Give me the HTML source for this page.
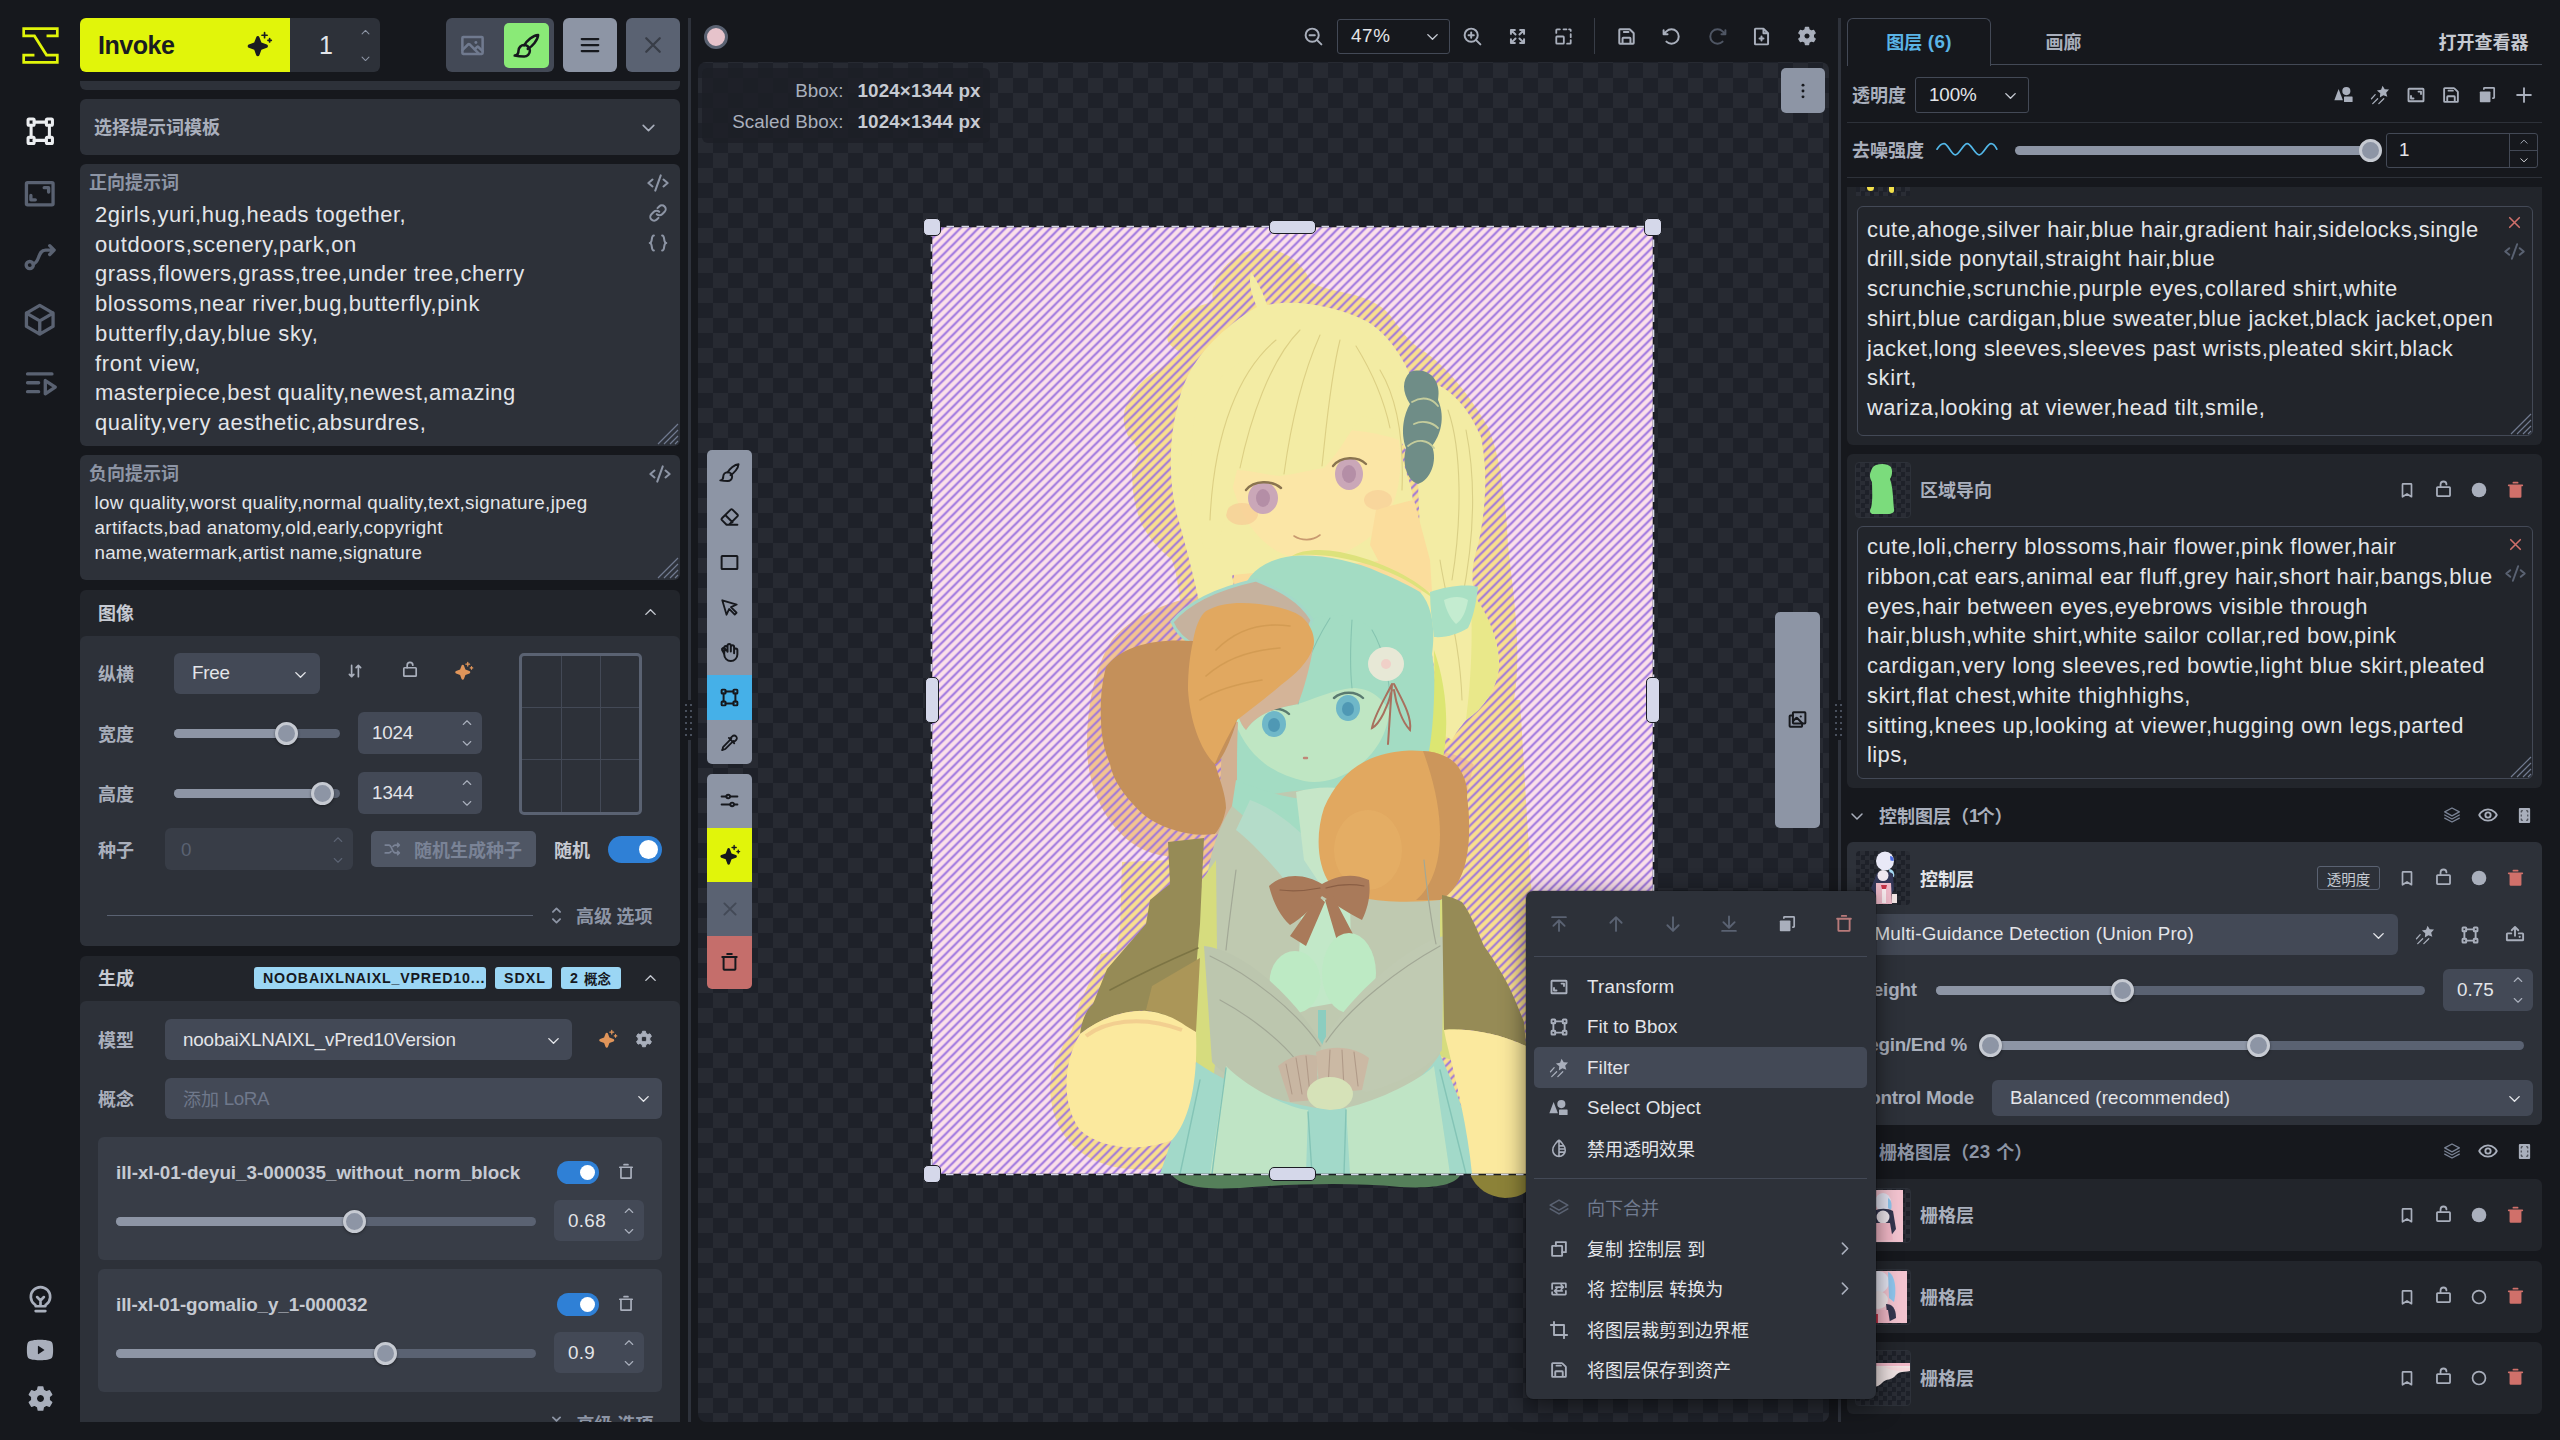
<!DOCTYPE html>
<html lang="zh-CN"><head><meta charset="utf-8"><title>Invoke - Canvas</title><style>
html,body{margin:0;padding:0}
body{width:2560px;height:1440px;overflow:hidden;background:#16181d;position:relative;font-family:"Liberation Sans","Noto Sans CJK SC",sans-serif;color:#e3e5e9}
.b,.t,.i{position:absolute}
.b{box-sizing:content-box}
.t{white-space:nowrap;font-size:18px}
.cj{letter-spacing:0;position:relative;top:1px}
.i{overflow:visible;display:block}
</style></head><body>
<svg class="i" style="left:21.5px;top:26.5px" width="37" height="37" viewBox="0 0 44 44"><path d="M29.1951 10.6667H42V2H2V10.6667H14.8049L29.1951 33.3333H42V42H2V33.3333H14.8049" fill="none" stroke="#e1f50a" stroke-width="3.2"/></svg><svg class="i" style="left:23.8px;top:114.8px;color:#eceef1;" width="32.5" height="32.5" viewBox="0 0 256 256"><rect x="32" y="32" width="48" height="48" rx="8" fill="none" stroke="currentColor" stroke-width="24" stroke-linejoin="round"/><rect x="176" y="32" width="48" height="48" rx="8" fill="none" stroke="currentColor" stroke-width="24" stroke-linejoin="round"/><rect x="32" y="176" width="48" height="48" rx="8" fill="none" stroke="currentColor" stroke-width="24" stroke-linejoin="round"/><rect x="176" y="176" width="48" height="48" rx="8" fill="none" stroke="currentColor" stroke-width="24" stroke-linejoin="round"/><path d="M80,56H176 M80,200H176 M56,80V176 M200,80V176" fill="none" stroke="currentColor" stroke-width="24" stroke-linecap="round" stroke-linejoin="round"/></svg><svg class="i" style="left:22.2px;top:176.2px;color:#5a6272;" width="35.5" height="35.5" viewBox="0 0 256 256"><rect x="32" y="48" width="192" height="160" rx="8" fill="none" stroke="currentColor" stroke-width="24" stroke-linejoin="round"/><path d="M160,84h32v32 M96,172H64V140" fill="none" stroke="currentColor" stroke-width="24" stroke-linecap="round" stroke-linejoin="round"/></svg><svg class="i" style="left:22.2px;top:239.2px;color:#5a6272;" width="35.5" height="35.5" viewBox="0 0 256 256"><circle cx="56" cy="188" r="26" fill="none" stroke="currentColor" stroke-width="24"/><path d="M80,180c50-8 30-100 90-100h62 M200,48 232,80 200,112" fill="none" stroke="currentColor" stroke-width="24" stroke-linecap="round" stroke-linejoin="round"/></svg><svg class="i" style="left:22.2px;top:302.2px;color:#5a6272;" width="35.5" height="35.5" viewBox="0 0 256 256"><path d="M32,80 128,24 224,80V176L128,232 32,176Z M32,80 128,136 224,80 M128,136V232" fill="none" stroke="currentColor" stroke-width="24" stroke-linecap="round" stroke-linejoin="round"/></svg><svg class="i" style="left:22.2px;top:365.2px;color:#5a6272;" width="35.5" height="35.5" viewBox="0 0 256 256"><path d="M40,64H216 M40,128H120 M40,192H120" fill="none" stroke="currentColor" stroke-width="24" stroke-linecap="round" stroke-linejoin="round"/><path d="M240,160 168,208V112Z" fill="none" stroke="currentColor" stroke-width="24" stroke-linecap="round" stroke-linejoin="round"/></svg><svg class="i" style="left:24.5px;top:1282.5px;color:#a9afbc;" width="31" height="31" viewBox="0 0 256 256"><path d="M88,232h80 M78,176a80,80 0 1 1 100,0 16,16 0 0 0-10,14v2H88v-2a16,16 0 0 0-10-14Z M128,192V144 M100,116l28,28 28-28" fill="none" stroke="currentColor" stroke-width="22" stroke-linecap="round" stroke-linejoin="round"/></svg><svg class="i" style="left:25.0px;top:1335.0px;color:#a9afbc;" width="30" height="30" viewBox="0 0 256 256"><path d="M234,70a24,24 0 0 0-15-17C186,40 131,40 128,40s-58,0-91,13A24,24 0 0 0 22,70c-3,10-6,28-6,58s3,48 6,58a24,24 0 0 0 15,17c33,13 88,13 91,13s58,0 91-13a24,24 0 0 0 15-17c3-10 6-28 6-58s-3-48-6-58ZM164,131l-48,32a4,4 0 0 1-6-3V96a4,4 0 0 1 6-3l48,32a4,4 0 0 1 0,6Z" fill="currentColor" fill-rule="evenodd"/></svg><svg class="i" style="left:26.5px;top:1384.5px;color:#a9afbc;" width="27" height="27" viewBox="0 0 256 256"><path d="M101.2,48.4 L107.0,18.0 L149.0,18.0 L154.8,48.4 L183.6,65.0 L212.8,54.8 L233.8,91.2 L210.3,111.4 L210.3,144.6 L233.8,164.8 L212.8,201.2 L183.6,191.0 L154.8,207.6 L149.0,238.0 L107.0,238.0 L101.2,207.6 L72.4,191.0 L43.2,201.2 L22.2,164.8 L45.7,144.6 L45.7,111.4 L22.2,91.2 L43.2,54.8 L72.4,65.0Z M128,88 a40,40 0 1 0 0.01,0Z" fill="currentColor" fill-rule="evenodd" stroke="currentColor" stroke-width="14" stroke-linejoin="round"/></svg>
<div class="b" style="left:80.0px;top:18.0px;width:210.0px;height:54.0px;background:#e1f50a;border-radius:6px 0 0 6px;"></div>
<div class="t" style="top:25.0px;height:40px;line-height:40px;color:#1a1c21;font-weight:700;left:98.0px;"><span style="font-size:25.08px;letter-spacing:-0.487px">Invoke</span></div>
<svg class="i" style="left:245.5px;top:30.5px;color:#1a1c21;" width="27" height="27" viewBox="0 0 256 256"><path d="M197.58,129.06,146,110l-19-51.62a15.92,15.92,0,0,0-29.88,0L78,110l-51.62,19a15.92,15.92,0,0,0,0,29.88L78,178l19,51.62a15.92,15.92,0,0,0,29.88,0L146,178l51.62-19a15.92,15.92,0,0,0,0-29.88ZM144,40a8,8,0,0,1,8-8h16V16a8,8,0,0,1,16,0V32h16a8,8,0,0,1,0,16H184V64a8,8,0,0,1-16,0V48H152A8,8,0,0,1,144,40ZM248,88a8,8,0,0,1-8,8h-8v8a8,8,0,0,1-16,0V96h-8a8,8,0,0,1,0-16h8V72a8,8,0,0,1,16,0v8h8A8,8,0,0,1,248,88Z" fill="currentColor"/></svg>
<div class="b" style="left:290.0px;top:18.0px;width:90.0px;height:54.0px;background:#2d3139;border-radius:0 6px 6px 0;"></div>
<div class="t" style="top:25.0px;height:40px;line-height:40px;color:#e3e5e9;left:319.0px;"><span style="font-size:25.08px;letter-spacing:-4.188px">1</span></div>
<svg class="i" style="left:359.5px;top:26.5px;color:#8d95a5;" width="11" height="11" viewBox="0 0 256 256"><path d="M48,160 128,80 208,160" fill="none" stroke="currentColor" stroke-width="24" stroke-linecap="round" stroke-linejoin="round"/></svg><svg class="i" style="left:359.5px;top:52.5px;color:#8d95a5;" width="11" height="11" viewBox="0 0 256 256"><path d="M208,96 128,176 48,96" fill="none" stroke="currentColor" stroke-width="24" stroke-linecap="round" stroke-linejoin="round"/></svg>
<div class="b" style="left:446.0px;top:18.0px;width:108.0px;height:54.0px;background:#434956;border-radius:6px;"></div>
<svg class="i" style="left:458.5px;top:31.5px;color:#707a8f;" width="27" height="27" viewBox="0 0 256 256"><rect x="32" y="48" width="192" height="160" rx="8" fill="none" stroke="currentColor" stroke-width="24" stroke-linejoin="round"/><circle cx="160" cy="100" r="14" fill="currentColor"/><path d="M32,172 88,116a8,8,0,0,1,11,0L190,208 M148,166 172,142a8,8,0,0,1,11,0L224,182" fill="none" stroke="currentColor" stroke-width="24" stroke-linecap="round" stroke-linejoin="round"/></svg>
<div class="b" style="left:504.0px;top:23.0px;width:45.0px;height:45.0px;background:#8aea77;border-radius:5px;"></div>
<svg class="i" style="left:512.5px;top:31.5px;color:#16181d;" width="27" height="27" viewBox="0 0 256 256"><path d="M16,224c26-2 36-18 36-46a54,54 0 1 1 54,54c-30,0-60-2-90-8Z" fill="none" stroke="currentColor" stroke-width="24" stroke-linecap="round" stroke-linejoin="round"/><path d="M106,126C130,84 190,30 238,28 236,76 182,138 140,160" fill="none" stroke="currentColor" stroke-width="24" stroke-linecap="round" stroke-linejoin="round"/></svg>
<div class="b" style="left:563.0px;top:18.0px;width:54.0px;height:54.0px;background:#8d95a5;border-radius:6px;"></div>
<svg class="i" style="left:578.0px;top:33.0px;color:#16181d;" width="24" height="24" viewBox="0 0 256 256"><path d="M40,128H216 M40,64H216 M40,192H216" fill="none" stroke="currentColor" stroke-width="24" stroke-linecap="round" stroke-linejoin="round"/></svg>
<div class="b" style="left:626.0px;top:18.0px;width:54.0px;height:54.0px;background:#5a6272;border-radius:6px;"></div>
<svg class="i" style="left:641.0px;top:33.0px;color:#383d47;" width="24" height="24" viewBox="0 0 256 256"><path d="M200,56 56,200 M200,200 56,56" fill="none" stroke="currentColor" stroke-width="24" stroke-linecap="round" stroke-linejoin="round"/></svg>
<div class="b" style="left:80.0px;top:81.0px;width:600.0px;height:9.0px;background:#2d3139;border-radius:0 0 6px 6px;"></div>
<div class="b" style="left:80.0px;top:99.0px;width:600.0px;height:56.0px;background:#2d3139;border-radius:6px;"></div>
<div class="t" style="top:107.0px;height:40px;line-height:40px;color:#a9afbc;font-weight:700;left:94.0px;"><span class="cj" style="font-size:18.00px">选择提示词模板</span></div>
<svg class="i" style="left:639.5px;top:118.5px;color:#a9afbc;" width="17" height="17" viewBox="0 0 256 256"><path d="M208,96 128,176 48,96" fill="none" stroke="currentColor" stroke-width="24" stroke-linecap="round" stroke-linejoin="round"/></svg>
<div class="b" style="left:80.0px;top:164.0px;width:600.0px;height:282.0px;background:#2d3139;border-radius:6px;"></div>
<div class="t" style="top:162.0px;height:40px;line-height:40px;color:#8d95a5;font-weight:700;left:89.0px;"><span class="cj" style="font-size:18.00px">正向提示词</span></div>
<div class="t" style="top:195.0px;height:40px;line-height:40px;color:#e3e5e9;left:95.0px;"><span style="font-size:21.95px;letter-spacing:0.558px">2girls,yuri,hug,heads together,</span></div>
<div class="t" style="top:224.7px;height:40px;line-height:40px;color:#e3e5e9;left:95.0px;"><span style="font-size:21.95px;letter-spacing:0.667px">outdoors,scenery,park,on</span></div>
<div class="t" style="top:254.4px;height:40px;line-height:40px;color:#e3e5e9;left:95.0px;"><span style="font-size:21.95px;letter-spacing:0.566px">grass,flowers,grass,tree,under tree,cherry</span></div>
<div class="t" style="top:284.1px;height:40px;line-height:40px;color:#e3e5e9;left:95.0px;"><span style="font-size:21.95px;letter-spacing:0.612px">blossoms,near river,bug,butterfly,pink</span></div>
<div class="t" style="top:313.8px;height:40px;line-height:40px;color:#e3e5e9;left:95.0px;"><span style="font-size:21.95px;letter-spacing:0.702px">butterfly,day,blue sky,</span></div>
<div class="t" style="top:343.5px;height:40px;line-height:40px;color:#e3e5e9;left:95.0px;"><span style="font-size:21.95px;letter-spacing:0.670px">front view,</span></div>
<div class="t" style="top:373.2px;height:40px;line-height:40px;color:#e3e5e9;left:95.0px;"><span style="font-size:21.95px;letter-spacing:0.546px">masterpiece,best quality,newest,amazing</span></div>
<div class="t" style="top:402.9px;height:40px;line-height:40px;color:#e3e5e9;left:95.0px;"><span style="font-size:21.95px;letter-spacing:0.555px">quality,very aesthetic,absurdres,</span></div>
<svg class="i" style="left:647.0px;top:172.0px;color:#8d95a5;" width="22" height="22" viewBox="0 0 256 256"><path d="M64,88 16,128 64,168 M192,88 240,128 192,168 M160,40 96,216" fill="none" stroke="currentColor" stroke-width="24" stroke-linecap="round" stroke-linejoin="round"/></svg><svg class="i" style="left:647.0px;top:202.0px;color:#8d95a5;" width="22" height="22" viewBox="0 0 256 256"><path d="M122.3,71.4l19.8-19.8a44.1,44.1,0,0,1,62.4,62.4l-28.3,28.2a43.9,43.9,0,0,1-62.3,0 M133.7,184.6l-19.8,19.8a44.1,44.1,0,0,1-62.4-62.4l28.3-28.2a43.9,43.9,0,0,1,62.3,0" fill="none" stroke="currentColor" stroke-width="24" stroke-linecap="round" stroke-linejoin="round"/></svg><svg class="i" style="left:647.0px;top:232.0px;color:#8d95a5;" width="22" height="22" viewBox="0 0 256 256"><path d="M80,40C40,40 72,128 32,128 72,128 40,216 80,216 M176,40c40,0 8,88 48,88-40,0-8,88-48,88" fill="none" stroke="currentColor" stroke-width="24" stroke-linecap="round" stroke-linejoin="round"/></svg><svg class="i" style="left:657px;top:423px" width="22" height="22" viewBox="0 0 22 22"><path d="M21,1 1,21 M21,7 7,21 M21,13 13,21 M21,18 18,21" stroke="#707a8f" stroke-width="1.2" fill="none"/></svg>
<div class="b" style="left:80.0px;top:455.0px;width:600.0px;height:125.0px;background:#2d3139;border-radius:6px;"></div>
<div class="t" style="top:453.0px;height:40px;line-height:40px;color:#8d95a5;font-weight:700;left:89.0px;"><span class="cj" style="font-size:18.00px">负向提示词</span></div>
<div class="t" style="top:483.0px;height:40px;line-height:40px;color:#e3e5e9;left:94.5px;"><span style="font-size:18.81px;letter-spacing:0.310px">low quality,worst quality,normal quality,text,signature,jpeg</span></div>
<div class="t" style="top:507.8px;height:40px;line-height:40px;color:#e3e5e9;left:94.5px;"><span style="font-size:18.81px;letter-spacing:0.333px">artifacts,bad anatomy,old,early,copyright</span></div>
<div class="t" style="top:532.6px;height:40px;line-height:40px;color:#e3e5e9;left:94.5px;"><span style="font-size:18.81px;letter-spacing:0.191px">name,watermark,artist name,signature</span></div>
<svg class="i" style="left:649.0px;top:463.0px;color:#8d95a5;" width="22" height="22" viewBox="0 0 256 256"><path d="M64,88 16,128 64,168 M192,88 240,128 192,168 M160,40 96,216" fill="none" stroke="currentColor" stroke-width="24" stroke-linecap="round" stroke-linejoin="round"/></svg><svg class="i" style="left:657px;top:557px" width="22" height="22" viewBox="0 0 22 22"><path d="M21,1 1,21 M21,7 7,21 M21,13 13,21 M21,18 18,21" stroke="#707a8f" stroke-width="1.2" fill="none"/></svg>
<div class="b" style="left:80.0px;top:590.0px;width:600.0px;height:356.0px;background:#22252b;border-radius:6px;"></div>
<div class="t" style="top:593.0px;height:40px;line-height:40px;color:#c6cad2;font-weight:700;left:98.0px;"><span class="cj" style="font-size:18.00px">图像</span></div>
<svg class="i" style="left:642.5px;top:604.5px;color:#c6cad2;" width="15" height="15" viewBox="0 0 256 256"><path d="M48,160 128,80 208,160" fill="none" stroke="currentColor" stroke-width="24" stroke-linecap="round" stroke-linejoin="round"/></svg>
<div class="b" style="left:80.0px;top:636.0px;width:600.0px;height:310.0px;background:#2d3139;border-radius:6px;"></div>
<div class="t" style="top:654.0px;height:40px;line-height:40px;color:#a9afbc;font-weight:700;left:98.0px;"><span class="cj" style="font-size:18.00px">纵横</span></div>
<div class="b" style="left:174.0px;top:653.0px;width:146.0px;height:41.0px;background:#434956;border-radius:6px;"></div>
<div class="t" style="top:653.0px;height:40px;line-height:40px;color:#e3e5e9;left:192.0px;"><span style="font-size:18.81px;letter-spacing:-0.270px">Free</span></div>
<svg class="i" style="left:292.5px;top:666.5px;color:#e3e5e9;" width="15" height="15" viewBox="0 0 256 256"><path d="M208,96 128,176 48,96" fill="none" stroke="currentColor" stroke-width="24" stroke-linecap="round" stroke-linejoin="round"/></svg><svg class="i" style="left:346.0px;top:662.0px;color:#a9afbc;" width="18" height="18" viewBox="0 0 256 256"><path d="M80,48V208 M48,176 80,208 112,176 M176,208V48 M144,80 176,48 208,80" fill="none" stroke="currentColor" stroke-width="24" stroke-linecap="round" stroke-linejoin="round"/></svg><svg class="i" style="left:401.0px;top:661.0px;color:#a9afbc;" width="18" height="18" viewBox="0 0 256 256"><rect x="40" y="96" width="176" height="120" rx="10" fill="none" stroke="currentColor" stroke-width="24" stroke-linejoin="round"/><path d="M88,96V60a40,40 0 0 1 80,0" fill="none" stroke="currentColor" stroke-width="24" stroke-linecap="round" stroke-linejoin="round"/></svg><svg class="i" style="left:454.0px;top:661.0px;color:#e0955a;" width="20" height="20" viewBox="0 0 256 256"><path d="M197.58,129.06,146,110l-19-51.62a15.92,15.92,0,0,0-29.88,0L78,110l-51.62,19a15.92,15.92,0,0,0,0,29.88L78,178l19,51.62a15.92,15.92,0,0,0,29.88,0L146,178l51.62-19a15.92,15.92,0,0,0,0-29.88ZM144,40a8,8,0,0,1,8-8h16V16a8,8,0,0,1,16,0V32h16a8,8,0,0,1,0,16H184V64a8,8,0,0,1-16,0V48H152A8,8,0,0,1,144,40ZM248,88a8,8,0,0,1-8,8h-8v8a8,8,0,0,1-16,0V96h-8a8,8,0,0,1,0-16h8V72a8,8,0,0,1,16,0v8h8A8,8,0,0,1,248,88Z" fill="currentColor"/></svg>
<div class="b" style="left:519.0px;top:653.0px;width:123.0px;height:162.0px;border-radius:5px;border:3px solid #5a6272;box-sizing:border-box;"></div>
<div class="b" style="left:561.0px;top:656.0px;width:1.0px;height:156.0px;background:#434956;"></div>
<div class="b" style="left:599.5px;top:656.0px;width:1.0px;height:156.0px;background:#434956;"></div>
<div class="b" style="left:522.0px;top:707.0px;width:117.0px;height:1.0px;background:#434956;"></div>
<div class="b" style="left:522.0px;top:759.0px;width:117.0px;height:1.0px;background:#434956;"></div>
<div class="t" style="top:713.5px;height:40px;line-height:40px;color:#a9afbc;font-weight:700;left:98.0px;"><span class="cj" style="font-size:18.00px">宽度</span></div>
<div class="b" style="left:174.0px;top:729.0px;width:166.0px;height:9.0px;background:#5a6272;border-radius:4.5px;"></div>
<div class="b" style="left:174.0px;top:729.0px;width:112.0px;height:9.0px;background:#8d95a5;border-radius:4.5px;"></div>
<div class="b" style="left:274.5px;top:722.0px;width:23.0px;height:23.0px;background:#8d95a5;border-radius:50%;border:3.5px solid #c6cad2;box-sizing:border-box;box-shadow:0 1px 3px rgba(0,0,0,.4);"></div>
<div class="b" style="left:358.0px;top:712.0px;width:124.0px;height:41.5px;background:#434956;border-radius:6px;"></div>
<div class="t" style="top:713.0px;height:40px;line-height:40px;color:#e3e5e9;left:372.0px;"><span style="font-size:18.81px;letter-spacing:-0.199px">1024</span></div>
<svg class="i" style="left:460.5px;top:716.5px;color:#a9afbc;" width="12" height="12" viewBox="0 0 256 256"><path d="M48,160 128,80 208,160" fill="none" stroke="currentColor" stroke-width="24" stroke-linecap="round" stroke-linejoin="round"/></svg><svg class="i" style="left:460.5px;top:736.5px;color:#a9afbc;" width="12" height="12" viewBox="0 0 256 256"><path d="M208,96 128,176 48,96" fill="none" stroke="currentColor" stroke-width="24" stroke-linecap="round" stroke-linejoin="round"/></svg>
<div class="t" style="top:774.0px;height:40px;line-height:40px;color:#a9afbc;font-weight:700;left:98.0px;"><span class="cj" style="font-size:18.00px">高度</span></div>
<div class="b" style="left:174.0px;top:789.0px;width:166.0px;height:9.0px;background:#5a6272;border-radius:4.5px;"></div>
<div class="b" style="left:174.0px;top:789.0px;width:148.0px;height:9.0px;background:#8d95a5;border-radius:4.5px;"></div>
<div class="b" style="left:310.5px;top:782.0px;width:23.0px;height:23.0px;background:#8d95a5;border-radius:50%;border:3.5px solid #c6cad2;box-sizing:border-box;box-shadow:0 1px 3px rgba(0,0,0,.4);"></div>
<div class="b" style="left:358.0px;top:772.0px;width:124.0px;height:41.5px;background:#434956;border-radius:6px;"></div>
<div class="t" style="top:773.0px;height:40px;line-height:40px;color:#e3e5e9;left:372.0px;"><span style="font-size:18.81px;letter-spacing:-0.027px">1344</span></div>
<svg class="i" style="left:460.5px;top:776.5px;color:#a9afbc;" width="12" height="12" viewBox="0 0 256 256"><path d="M48,160 128,80 208,160" fill="none" stroke="currentColor" stroke-width="24" stroke-linecap="round" stroke-linejoin="round"/></svg><svg class="i" style="left:460.5px;top:796.5px;color:#a9afbc;" width="12" height="12" viewBox="0 0 256 256"><path d="M208,96 128,176 48,96" fill="none" stroke="currentColor" stroke-width="24" stroke-linecap="round" stroke-linejoin="round"/></svg>
<div class="t" style="top:830.0px;height:40px;line-height:40px;color:#a9afbc;font-weight:700;left:98.0px;"><span class="cj" style="font-size:18.00px">种子</span></div>
<div class="b" style="left:165.0px;top:828.0px;width:188.0px;height:42.0px;background:#383d47;border-radius:6px;"></div>
<div class="t" style="top:830.0px;height:40px;line-height:40px;color:#5a6272;left:181.0px;"><span style="font-size:18.81px;letter-spacing:0.906px">0</span></div>
<svg class="i" style="left:332.0px;top:833.5px;color:#5a6272;" width="12" height="12" viewBox="0 0 256 256"><path d="M48,160 128,80 208,160" fill="none" stroke="currentColor" stroke-width="24" stroke-linecap="round" stroke-linejoin="round"/></svg><svg class="i" style="left:332.0px;top:853.5px;color:#5a6272;" width="12" height="12" viewBox="0 0 256 256"><path d="M208,96 128,176 48,96" fill="none" stroke="currentColor" stroke-width="24" stroke-linecap="round" stroke-linejoin="round"/></svg>
<div class="b" style="left:371.0px;top:831.0px;width:164.5px;height:35.5px;background:#4f5664;border-radius:5px;"></div>
<svg class="i" style="left:383.0px;top:840.0px;color:#7a8396;" width="18" height="18" viewBox="0 0 256 256"><path d="M32,72H84c44,0 44,112 88,112H232 M208,160 232,184 208,208 M32,184H84c14,0 22-8 30-20 M142,92c8-12 16-20 30-20H232 M208,48 232,72 208,96" fill="none" stroke="currentColor" stroke-width="24" stroke-linecap="round" stroke-linejoin="round"/></svg>
<div class="t" style="top:830.0px;height:40px;line-height:40px;color:#7a8396;font-weight:700;left:414.0px;"><span class="cj" style="font-size:18.00px">随机生成种子</span></div>
<div class="t" style="top:830.0px;height:40px;line-height:40px;color:#c6cad2;font-weight:700;left:554.0px;"><span class="cj" style="font-size:18.00px">随机</span></div>
<div class="b" style="left:608.0px;top:836.0px;width:54.0px;height:27.0px;background:#2f80d6;border-radius:13.5px;"></div>
<div class="b" style="left:639.0px;top:840.0px;width:19.0px;height:19.0px;background:#fff;border-radius:50%;"></div>
<div class="b" style="left:107.0px;top:915.0px;width:426.0px;height:1.0px;background:#5a6272;"></div>
<svg class="i" style="left:546.5px;top:906.0px;color:#8d95a5;" width="19" height="19" viewBox="0 0 256 256"><path d="M80,176 128,224 176,176 M80,80 128,32 176,80" fill="none" stroke="currentColor" stroke-width="24" stroke-linecap="round" stroke-linejoin="round"/></svg>
<div class="t" style="top:896.0px;height:40px;line-height:40px;color:#8d95a5;font-weight:700;left:576.0px;"><span class="cj" style="font-size:18.00px">高级</span><span style="font-size:18.81px;letter-spacing:-0.688px"> </span><span class="cj" style="font-size:18.00px">选项</span></div>
<div class="b" style="left:80.0px;top:956.0px;width:600.0px;height:466.0px;background:#22252b;border-radius:6px 6px 0 0;"></div>
<div class="t" style="top:958.0px;height:40px;line-height:40px;color:#c6cad2;font-weight:700;left:98.0px;"><span class="cj" style="font-size:18.00px">生成</span></div>
<div class="b" style="left:254.0px;top:967.0px;width:232.0px;height:22.0px;background:#9bd6f4;border-radius:3px;"></div>
<div class="t" style="left:263px;top:958px;height:40px;line-height:40px;color:#16181d;font-weight:700;font-size:14.2px;letter-spacing:0.85px">NOOBAIXLNAIXL_VPRED10...</div>
<div class="b" style="left:495.0px;top:967.0px;width:57.0px;height:22.0px;background:#9bd6f4;border-radius:3px;"></div>
<div class="t" style="left:504px;top:958px;height:40px;line-height:40px;color:#16181d;font-weight:700;font-size:14.2px;letter-spacing:1.05px">SDXL</div>
<div class="b" style="left:561.0px;top:967.0px;width:60.0px;height:22.0px;background:#9bd6f4;border-radius:3px;"></div>
<div class="t" style="left:570px;top:958px;height:40px;line-height:40px;color:#16181d;font-weight:700;font-size:14.2px;letter-spacing:1.05px">2 <span class="cj" style="font-size:13.5px;letter-spacing:0">概念</span></div>
<svg class="i" style="left:642.5px;top:970.5px;color:#c6cad2;" width="15" height="15" viewBox="0 0 256 256"><path d="M48,160 128,80 208,160" fill="none" stroke="currentColor" stroke-width="24" stroke-linecap="round" stroke-linejoin="round"/></svg>
<div class="b" style="left:80.0px;top:1001.0px;width:600.0px;height:421.0px;background:#2d3139;border-radius:6px 6px 0 0;"></div>
<div class="t" style="top:1019.5px;height:40px;line-height:40px;color:#a9afbc;font-weight:700;left:98.0px;"><span class="cj" style="font-size:18.00px">模型</span></div>
<div class="b" style="left:165.0px;top:1019.0px;width:407.0px;height:41.0px;background:#434956;border-radius:6px;"></div>
<div class="t" style="top:1019.5px;height:40px;line-height:40px;color:#e3e5e9;left:183.0px;"><span style="font-size:18.81px;letter-spacing:-0.150px">noobaiXLNAIXL_vPred10Version</span></div>
<svg class="i" style="left:545.5px;top:1032.5px;color:#e3e5e9;" width="15" height="15" viewBox="0 0 256 256"><path d="M208,96 128,176 48,96" fill="none" stroke="currentColor" stroke-width="24" stroke-linecap="round" stroke-linejoin="round"/></svg><svg class="i" style="left:597.5px;top:1029.0px;color:#e0955a;" width="20" height="20" viewBox="0 0 256 256"><path d="M197.58,129.06,146,110l-19-51.62a15.92,15.92,0,0,0-29.88,0L78,110l-51.62,19a15.92,15.92,0,0,0,0,29.88L78,178l19,51.62a15.92,15.92,0,0,0,29.88,0L146,178l51.62-19a15.92,15.92,0,0,0,0-29.88ZM144,40a8,8,0,0,1,8-8h16V16a8,8,0,0,1,16,0V32h16a8,8,0,0,1,0,16H184V64a8,8,0,0,1-16,0V48H152A8,8,0,0,1,144,40ZM248,88a8,8,0,0,1-8,8h-8v8a8,8,0,0,1-16,0V96h-8a8,8,0,0,1,0-16h8V72a8,8,0,0,1,16,0v8h8A8,8,0,0,1,248,88Z" fill="currentColor"/></svg><svg class="i" style="left:635.0px;top:1030.0px;color:#a9afbc;" width="18" height="18" viewBox="0 0 256 256"><path d="M101.2,48.4 L107.0,18.0 L149.0,18.0 L154.8,48.4 L183.6,65.0 L212.8,54.8 L233.8,91.2 L210.3,111.4 L210.3,144.6 L233.8,164.8 L212.8,201.2 L183.6,191.0 L154.8,207.6 L149.0,238.0 L107.0,238.0 L101.2,207.6 L72.4,191.0 L43.2,201.2 L22.2,164.8 L45.7,144.6 L45.7,111.4 L22.2,91.2 L43.2,54.8 L72.4,65.0Z M128,88 a40,40 0 1 0 0.01,0Z" fill="currentColor" fill-rule="evenodd" stroke="currentColor" stroke-width="14" stroke-linejoin="round"/></svg>
<div class="t" style="top:1078.5px;height:40px;line-height:40px;color:#a9afbc;font-weight:700;left:98.0px;"><span class="cj" style="font-size:18.00px">概念</span></div>
<div class="b" style="left:165.0px;top:1078.0px;width:497.0px;height:41.0px;background:#434956;border-radius:6px;"></div>
<div class="t" style="top:1078.5px;height:40px;line-height:40px;color:#6f788b;left:183.0px;"><span class="cj" style="font-size:18.00px">添加</span><span style="font-size:18.81px;letter-spacing:-0.441px"> LoRA</span></div>
<svg class="i" style="left:635.5px;top:1091.0px;color:#e3e5e9;" width="15" height="15" viewBox="0 0 256 256"><path d="M208,96 128,176 48,96" fill="none" stroke="currentColor" stroke-width="24" stroke-linecap="round" stroke-linejoin="round"/></svg>
<div class="b" style="left:98.0px;top:1137.0px;width:564.0px;height:123.0px;background:#383d47;border-radius:6px;"></div>
<div class="t" style="top:1152.5px;height:40px;line-height:40px;color:#c6cad2;font-weight:700;left:116.0px;"><span style="font-size:18.81px;letter-spacing:-0.002px">ill-xl-01-deyui_3-000035_without_norm_block</span></div>
<div class="b" style="left:557.0px;top:1161.0px;width:42.0px;height:23.0px;background:#2f80d6;border-radius:11.5px;"></div>
<div class="b" style="left:580.0px;top:1165.0px;width:15.0px;height:15.0px;background:#fff;border-radius:50%;"></div>
<svg class="i" style="left:617.0px;top:1163.0px;color:#a9afbc;" width="18" height="18" viewBox="0 0 256 256"><path d="M100,24H156 M40,60H216 M200,60V208a8,8 0 0 1-8,8H64a8,8 0 0 1-8-8V60" fill="none" stroke="currentColor" stroke-width="24" stroke-linecap="round" stroke-linejoin="round"/></svg>
<div class="b" style="left:116.0px;top:1216.5px;width:420.0px;height:9.0px;background:#5a6272;border-radius:4.5px;"></div>
<div class="b" style="left:116.0px;top:1216.5px;width:238.0px;height:9.0px;background:#8d95a5;border-radius:4.5px;"></div>
<div class="b" style="left:342.5px;top:1209.5px;width:23.0px;height:23.0px;background:#8d95a5;border-radius:50%;border:3.5px solid #c6cad2;box-sizing:border-box;box-shadow:0 1px 3px rgba(0,0,0,.4);"></div>
<div class="b" style="left:554.0px;top:1200.0px;width:90.0px;height:41.0px;background:#434956;border-radius:6px;"></div>
<div class="t" style="top:1200.5px;height:40px;line-height:40px;color:#e3e5e9;left:568.0px;"><span style="font-size:18.81px;letter-spacing:0.340px">0.68</span></div>
<svg class="i" style="left:623.0px;top:1204.5px;color:#a9afbc;" width="12" height="12" viewBox="0 0 256 256"><path d="M48,160 128,80 208,160" fill="none" stroke="currentColor" stroke-width="24" stroke-linecap="round" stroke-linejoin="round"/></svg><svg class="i" style="left:623.0px;top:1224.5px;color:#a9afbc;" width="12" height="12" viewBox="0 0 256 256"><path d="M208,96 128,176 48,96" fill="none" stroke="currentColor" stroke-width="24" stroke-linecap="round" stroke-linejoin="round"/></svg>
<div class="b" style="left:98.0px;top:1269.0px;width:564.0px;height:123.0px;background:#383d47;border-radius:6px;"></div>
<div class="t" style="top:1284.5px;height:40px;line-height:40px;color:#c6cad2;font-weight:700;left:116.0px;"><span style="font-size:18.81px;letter-spacing:-0.091px">ill-xl-01-gomalio_y_1-000032</span></div>
<div class="b" style="left:557.0px;top:1293.0px;width:42.0px;height:23.0px;background:#2f80d6;border-radius:11.5px;"></div>
<div class="b" style="left:580.0px;top:1297.0px;width:15.0px;height:15.0px;background:#fff;border-radius:50%;"></div>
<svg class="i" style="left:617.0px;top:1295.0px;color:#a9afbc;" width="18" height="18" viewBox="0 0 256 256"><path d="M100,24H156 M40,60H216 M200,60V208a8,8 0 0 1-8,8H64a8,8 0 0 1-8-8V60" fill="none" stroke="currentColor" stroke-width="24" stroke-linecap="round" stroke-linejoin="round"/></svg>
<div class="b" style="left:116.0px;top:1348.5px;width:420.0px;height:9.0px;background:#5a6272;border-radius:4.5px;"></div>
<div class="b" style="left:116.0px;top:1348.5px;width:269.5px;height:9.0px;background:#8d95a5;border-radius:4.5px;"></div>
<div class="b" style="left:374.0px;top:1341.5px;width:23.0px;height:23.0px;background:#8d95a5;border-radius:50%;border:3.5px solid #c6cad2;box-sizing:border-box;box-shadow:0 1px 3px rgba(0,0,0,.4);"></div>
<div class="b" style="left:554.0px;top:1332.0px;width:90.0px;height:41.0px;background:#434956;border-radius:6px;"></div>
<div class="t" style="top:1332.5px;height:40px;line-height:40px;color:#e3e5e9;left:568.0px;"><span style="font-size:18.81px;letter-spacing:0.333px">0.9</span></div>
<svg class="i" style="left:623.0px;top:1336.5px;color:#a9afbc;" width="12" height="12" viewBox="0 0 256 256"><path d="M48,160 128,80 208,160" fill="none" stroke="currentColor" stroke-width="24" stroke-linecap="round" stroke-linejoin="round"/></svg><svg class="i" style="left:623.0px;top:1356.5px;color:#a9afbc;" width="12" height="12" viewBox="0 0 256 256"><path d="M208,96 128,176 48,96" fill="none" stroke="currentColor" stroke-width="24" stroke-linecap="round" stroke-linejoin="round"/></svg>
<div class="b" style="left:80px;top:1408px;width:600px;height:14px;overflow:hidden"><svg class="i" style="left:467.0px;top:7.0px;color:#8d95a5;" width="19" height="19" viewBox="0 0 256 256"><path d="M80,32 128,80 176,32 M80,224 128,176 176,224" fill="none" stroke="currentColor" stroke-width="24" stroke-linecap="round" stroke-linejoin="round"/></svg>
<div class="t" style="left:496.5px;top:-4px;height:40px;line-height:40px;color:#8d95a5;font-weight:700"><span class="cj" style="font-size:18px">高级 选项</span></div></div>
<div class="b" style="left:687.5px;top:18.0px;width:3.0px;height:1404.0px;background:#2e323b;"></div>
<div class="b" style="left:683.0px;top:700.0px;width:11.0px;height:40.0px;background:#16181d;"></div>
<div class="b" style="left:685.0px;top:704.0px;width:2.0px;height:2.0px;background:#5a6272;border-radius:1px;"></div>
<div class="b" style="left:685.0px;top:710.0px;width:2.0px;height:2.0px;background:#5a6272;border-radius:1px;"></div>
<div class="b" style="left:685.0px;top:716.0px;width:2.0px;height:2.0px;background:#5a6272;border-radius:1px;"></div>
<div class="b" style="left:685.0px;top:722.0px;width:2.0px;height:2.0px;background:#5a6272;border-radius:1px;"></div>
<div class="b" style="left:685.0px;top:728.0px;width:2.0px;height:2.0px;background:#5a6272;border-radius:1px;"></div>
<div class="b" style="left:685.0px;top:734.0px;width:2.0px;height:2.0px;background:#5a6272;border-radius:1px;"></div>
<div class="b" style="left:690.0px;top:704.0px;width:2.0px;height:2.0px;background:#5a6272;border-radius:1px;"></div>
<div class="b" style="left:690.0px;top:710.0px;width:2.0px;height:2.0px;background:#5a6272;border-radius:1px;"></div>
<div class="b" style="left:690.0px;top:716.0px;width:2.0px;height:2.0px;background:#5a6272;border-radius:1px;"></div>
<div class="b" style="left:690.0px;top:722.0px;width:2.0px;height:2.0px;background:#5a6272;border-radius:1px;"></div>
<div class="b" style="left:690.0px;top:728.0px;width:2.0px;height:2.0px;background:#5a6272;border-radius:1px;"></div>
<div class="b" style="left:690.0px;top:734.0px;width:2.0px;height:2.0px;background:#5a6272;border-radius:1px;"></div>
<div class="b" style="left:703.5px;top:24.5px;width:24.0px;height:24.0px;background:#e6c3cb;border-radius:50%;border:3px solid #5a6272;box-sizing:border-box;"></div>
<svg class="i" style="left:1303.0px;top:25.5px;color:#a9afbc;" width="21" height="21" viewBox="0 0 256 256"><circle cx="112" cy="112" r="80" fill="none" stroke="currentColor" stroke-width="24"/><path d="M168.6,168.6 224,224 M80,112H144" fill="none" stroke="currentColor" stroke-width="24" stroke-linecap="round" stroke-linejoin="round"/></svg>
<div class="b" style="left:1336.5px;top:18.5px;width:113.0px;height:35.0px;border-radius:3px;border:1px solid #434956;box-sizing:border-box;"></div>
<div class="t" style="top:16.0px;height:40px;line-height:40px;color:#e3e5e9;left:1351.0px;"><span style="font-size:18.81px;letter-spacing:0.620px">47%</span></div>
<svg class="i" style="left:1424.5px;top:29.0px;color:#c6cad2;" width="15" height="15" viewBox="0 0 256 256"><path d="M208,96 128,176 48,96" fill="none" stroke="currentColor" stroke-width="24" stroke-linecap="round" stroke-linejoin="round"/></svg><svg class="i" style="left:1462.0px;top:25.5px;color:#a9afbc;" width="21" height="21" viewBox="0 0 256 256"><circle cx="112" cy="112" r="80" fill="none" stroke="currentColor" stroke-width="24"/><path d="M168.6,168.6 224,224 M80,112H144 M112,80V144" fill="none" stroke="currentColor" stroke-width="24" stroke-linecap="round" stroke-linejoin="round"/></svg><svg class="i" style="left:1507.0px;top:25.5px;color:#a9afbc;" width="21" height="21" viewBox="0 0 256 256"><path d="M160,48h48v48 M208,48 152,104 M96,208H48V160 M48,208 104,152 M208,160v48h-48 M208,208 152,152 M48,96V48h48 M48,48 104,104" fill="none" stroke="currentColor" stroke-width="24" stroke-linecap="round" stroke-linejoin="round"/></svg><svg class="i" style="left:1552.5px;top:25.5px;color:#a9afbc;" width="21" height="21" viewBox="0 0 256 256"><path d="M40,84V48a8,8 0 0 1 8-8H84 M128,40h36 M196,40h12a8,8 0 0 1 8,8V60 M216,100v36 M216,172v36a8,8 0 0 1-8,8H172" fill="none" stroke="currentColor" stroke-width="22" stroke-linecap="round" stroke-linejoin="round"/><rect x="40" y="128" width="92" height="88" rx="8" fill="none" stroke="currentColor" stroke-width="22" stroke-linejoin="round"/></svg>
<div class="b" style="left:1594.0px;top:18.0px;width:1.0px;height:36.0px;background:#383d47;"></div>
<svg class="i" style="left:1616.0px;top:25.5px;color:#a9afbc;" width="21" height="21" viewBox="0 0 256 256"><path d="M216,91.3V208a8,8 0 0 1-8,8H48a8,8 0 0 1-8-8V48a8,8 0 0 1 8-8H164.7a8,8 0 0 1 5.6,2.3l43.4,43.4A8,8 0 0 1 216,91.3Z M80,216V152a8,8 0 0 1 8-8h80a8,8 0 0 1 8,8v64 M152,72H96" fill="none" stroke="currentColor" stroke-width="24" stroke-linecap="round" stroke-linejoin="round"/></svg><svg class="i" style="left:1661.0px;top:25.5px;color:#a9afbc;" width="21" height="21" viewBox="0 0 256 256"><path d="M79.8,99.7h-48v-48 M65.8,190.2a88,88 0 1 0 0-124.4L31.8,99.7" fill="none" stroke="currentColor" stroke-width="24" stroke-linecap="round" stroke-linejoin="round"/></svg><svg class="i" style="left:1706.5px;top:25.5px;color:#4f5664;" width="21" height="21" viewBox="0 0 256 256"><path d="M176.2,99.7h48v-48 M190.2,190.2a88,88 0 1 1 0-124.4l34,33.9" fill="none" stroke="currentColor" stroke-width="24" stroke-linecap="round" stroke-linejoin="round"/></svg><svg class="i" style="left:1751.0px;top:25.5px;color:#a9afbc;" width="21" height="21" viewBox="0 0 256 256"><path d="M200,224H56a8,8 0 0 1-8-8V40a8,8 0 0 1 8-8h96l56,56V216a8,8 0 0 1-8,8Z M152,32V88h56 M104,152h48 M128,128v48" fill="none" stroke="currentColor" stroke-width="24" stroke-linecap="round" stroke-linejoin="round"/></svg><svg class="i" style="left:1796.5px;top:26.0px;color:#a9afbc;" width="20" height="20" viewBox="0 0 256 256"><path d="M101.2,48.4 L107.0,18.0 L149.0,18.0 L154.8,48.4 L183.6,65.0 L212.8,54.8 L233.8,91.2 L210.3,111.4 L210.3,144.6 L233.8,164.8 L212.8,201.2 L183.6,191.0 L154.8,207.6 L149.0,238.0 L107.0,238.0 L101.2,207.6 L72.4,191.0 L43.2,201.2 L22.2,164.8 L45.7,144.6 L45.7,111.4 L22.2,91.2 L43.2,54.8 L72.4,65.0Z M128,88 a40,40 0 1 0 0.01,0Z" fill="currentColor" fill-rule="evenodd" stroke="currentColor" stroke-width="14" stroke-linejoin="round"/></svg>
<div class="b" style="left:698.0px;top:62.0px;width:1131.0px;height:1360.0px;border-radius:8px;background-color:#1e2129;background-image:conic-gradient(#272a32 25%,#1e2129 0 50%,#272a32 0 75%,#1e2129 0);background-size:30px 30px;background-position:0px 1px;overflow:hidden;"><svg class="i" style="left:0;top:0" width="1131" height="1360" viewBox="698 62 1131 1360"><defs>
<pattern id="hatch" width="9" height="9" patternUnits="userSpaceOnUse" patternTransform="translate(931.5 226.5)">
<path d="M-1,4.7 4.7,-1 M2.7,10 10,2.7" stroke="#9a70de" stroke-width="2.0"/>
</pattern>
<clipPath id="bb"><rect x="931.5" y="226.5" width="722" height="948"/></clipPath>
<clipPath id="below"><rect x="931.5" y="1174.5" width="722" height="60"/></clipPath>
<filter id="b1" x="-10%" y="-10%" width="120%" height="120%"><feGaussianBlur stdDeviation="1.2"/></filter>
<filter id="b3" x="-20%" y="-20%" width="140%" height="140%"><feGaussianBlur stdDeviation="3"/></filter>
<filter id="b6" x="-30%" y="-30%" width="160%" height="160%"><feGaussianBlur stdDeviation="6"/></filter>
</defs><g clip-path="url(#below)"><path d="M1169,1170 L1462,1170 C1460,1184 1440,1189 1400,1187 C1350,1182 1290,1184 1240,1188 C1200,1190 1176,1186 1169,1170Z" fill="#55805a"/><path d="M1464,1146 L1540,1146 C1542,1180 1530,1198 1505,1198 C1480,1196 1466,1180 1464,1146Z" fill="#8c8238"/></g><g clip-path="url(#bb)"><rect x="931.5" y="226.5" width="722" height="948" fill="#fbe0ea"/><path d="M1259,249 C1280,248 1300,258 1311,282 C1330,294 1360,290 1384,309 C1398,322 1402,338 1425,352 C1448,368 1470,396 1488,427 C1500,455 1506,500 1508,545 C1514,600 1522,650 1514,700 L1500,770 L1190,700 L1180,600 C1178,585 1176,570 1172,560 C1160,550 1146,536 1140,520 C1134,505 1132,488 1132,470 C1142,455 1140,449 1128,436 C1120,420 1124,405 1134,392 C1142,380 1150,375 1158,370 C1170,362 1178,356 1180,352 C1166,344 1162,338 1176,322 C1182,312 1190,308 1213,302 C1212,292 1212,286 1215,285 C1218,270 1235,252 1259,249Z" fill="#f9df8e"/><path d="M1112,640 C1140,606 1200,590 1240,596 L1300,700 L1250,880 L1170,884 L1167,856 C1120,852 1085,800 1087,740 C1088,700 1096,665 1112,640Z" fill="#f3c490"/><path d="M1440,752 C1480,756 1508,790 1506,836 C1504,880 1492,905 1466,912 L1380,900 L1380,780Z" fill="#f3c490"/><path d="M1490,700 L1520,700 L1532,900 C1560,960 1574,1000 1577,1040 L1582,1174 L1440,1174 L1440,900Z" fill="#f9df8e"/><path d="M1172,860 L1122,862 L1120,930 L1116,950 L1101,954 L1096,968 L1079,1005 L1072,1030 C1060,1050 1052,1066 1050,1085 C1050,1130 1075,1160 1120,1168 C1150,1172 1180,1165 1200,1174 L1260,1174 L1260,870Z" fill="#f9df8e"/><rect x="931.5" y="226.5" width="722" height="948" fill="url(#hatch)"/><path d="M1425,381 C1445,384 1466,402 1481,437 C1488,470 1486,510 1478,545 C1470,570 1470,590 1482,610 C1494,630 1500,650 1499,668 C1496,690 1484,708 1466,720 C1460,728 1456,732 1452,740 L1440,733 C1438,710 1436,690 1434,668 C1432,650 1428,636 1412,611 C1414,590 1416,566 1420,545 C1420,520 1418,500 1418,470 C1420,440 1428,410 1425,381Z" fill="#f3eca4"/><path d="M1470,590 C1490,615 1500,645 1499,668 C1496,690 1484,708 1466,720 C1470,690 1474,640 1470,590Z" fill="#e9e88a"/><path d="M1448,410 C1462,450 1462,520 1452,580 M1466,430 C1476,480 1474,540 1462,600 M1440,560 C1446,600 1460,640 1462,700" fill="none" stroke="#d9cf86" stroke-width="1.1" stroke-linecap="round"/><path d="M1232,520 L1400,500 L1432,640 L1236,640Z" fill="#fbdc9a"/><path d="M1251,272 C1258,282 1264,295 1267,305 C1290,300 1330,303 1368,322 C1390,336 1404,360 1412,379 C1418,410 1404,430 1401,449 C1404,470 1410,480 1412,492 C1414,515 1416,530 1416,545 C1418,580 1420,610 1418,640 L1396,640 L1390,560 L1232,575 C1236,600 1238,620 1234,640 L1206,640 C1200,600 1192,570 1180,525 C1168,490 1168,440 1178,405 C1185,370 1205,346 1232,324 C1242,316 1250,311 1257,307 C1252,296 1248,284 1251,272Z" fill="#f3eca4"/><path d="M1226,455 C1262,430 1340,420 1399,440 C1404,480 1396,516 1366,540 C1340,558 1318,564 1299,560 C1262,550 1236,522 1226,455Z" fill="#fbe6a6"/><ellipse cx="1242" cy="514" rx="16" ry="11" fill="#f6cc96" opacity=".7"/><ellipse cx="1378" cy="500" rx="14" ry="10" fill="#f6cc96" opacity=".6"/><path d="M1376,510 C1390,506 1404,502 1414,500 L1430,560 L1432,592 L1400,590 C1388,580 1378,560 1370,545Z" fill="#fbdd9c"/><path d="M1196,410 C1226,352 1300,330 1360,345 C1398,362 1412,405 1406,450 C1396,430 1380,418 1362,416 C1350,430 1340,452 1324,468 C1310,470 1296,474 1280,476 C1262,474 1248,470 1237,470 C1232,490 1228,510 1222,530 C1216,545 1210,552 1204,548 C1192,500 1188,450 1196,410Z" fill="#f3eca4"/><path d="M1300,330 C1270,360 1250,420 1240,468 M1320,335 C1300,380 1290,430 1284,474 M1340,340 C1330,380 1326,430 1322,466 M1276,340 C1240,370 1214,430 1210,520 M1356,346 C1372,372 1384,400 1390,428 M1380,370 C1398,400 1404,440 1402,490" fill="none" stroke="#dccf84" stroke-width="1.1" stroke-linecap="round"/><ellipse cx="1263" cy="498" rx="15" ry="16" fill="#caa7b8"/><ellipse cx="1263" cy="498" rx="7" ry="9" fill="#b48ea6"/><path d="M1246,490 C1254,480 1272,480 1281,488" fill="none" stroke="#8a7450" stroke-width="2.4" stroke-linecap="round"/><ellipse cx="1349" cy="474" rx="14" ry="16" fill="#caa7b8"/><ellipse cx="1349" cy="474" rx="7" ry="9" fill="#b48ea6"/><path d="M1333,466 C1341,456 1358,456 1366,464" fill="none" stroke="#8a7450" stroke-width="2.4" stroke-linecap="round"/><path d="M1294,536 C1302,541 1312,541 1320,535" fill="none" stroke="#c89a70" stroke-width="1.6" stroke-linecap="round"/><path d="M1410,372 C1428,366 1442,380 1438,400 C1446,418 1440,436 1432,446 C1438,462 1430,480 1418,484 C1406,480 1402,462 1406,448 C1400,432 1404,414 1410,404 C1402,392 1402,380 1410,372Z" fill="#6f8d87"/><path d="M1412,402 C1422,396 1432,398 1438,406 M1408,446 C1418,438 1428,440 1434,448 M1414,424 C1422,420 1432,422 1438,428" fill="none" stroke="#c4cc9c" stroke-width="1.8" stroke-linecap="round"/><path d="M1241,600 C1244,575 1262,560 1292,556 C1320,554 1352,560 1381,573 C1398,580 1410,586 1420,592 C1436,610 1434,640 1432,654 C1436,680 1436,700 1434,720 C1434,740 1432,755 1429,764 C1424,776 1418,782 1412,782 L1381,786 L1240,800 C1228,760 1226,700 1230,650Z" fill="#a3dcc3"/><path d="M1292,556 C1330,550 1390,566 1424,592 L1436,600 C1420,580 1380,560 1340,552 C1320,548 1300,550 1292,556Z" fill="#dde27c"/><path d="M1434,650 C1448,690 1450,735 1440,772 C1434,790 1424,792 1416,786 C1430,770 1436,720 1434,650Z" fill="#dce672"/><path d="M1430,592 C1448,586 1466,584 1478,587 C1476,606 1472,620 1468,628 C1458,634 1446,638 1434,637 C1432,622 1430,606 1430,592Z" fill="#a9e0c4"/><path d="M1444,600 C1452,596 1462,596 1468,600 C1466,612 1462,620 1456,624 C1450,618 1446,610 1444,600Z" fill="#c4ecd0"/><path d="M1232,712 C1250,680 1340,664 1390,690 C1392,720 1384,745 1360,765 C1340,780 1320,784 1304,781 C1270,774 1242,752 1232,712Z" fill="#bfe6c3"/><path d="M1236,700 C1240,650 1290,612 1345,616 C1392,626 1404,676 1392,716 C1384,698 1370,688 1352,688 C1334,690 1316,698 1298,704 C1278,708 1258,712 1246,730 C1240,724 1236,712 1236,700Z" fill="#a3dcc3"/><path d="M1330,618 C1310,650 1300,680 1298,704 M1352,620 C1350,650 1350,670 1352,688 M1372,630 C1384,650 1390,680 1390,704 M1300,624 C1270,650 1252,690 1248,724" fill="none" stroke="#86c4b0" stroke-width="1.1" stroke-linecap="round"/><ellipse cx="1274" cy="724" rx="12" ry="13" fill="#6fb7c8"/><ellipse cx="1274" cy="725" rx="6" ry="7" fill="#4f98b4"/><ellipse cx="1348" cy="708" rx="12" ry="13" fill="#6fb7c8"/><ellipse cx="1348" cy="709" rx="6" ry="7" fill="#4f98b4"/><path d="M1260,714 C1268,707 1282,707 1289,714 M1334,698 C1342,691 1356,691 1363,698" fill="none" stroke="#5a7a70" stroke-width="2.4" stroke-linecap="round"/><path d="M1304,758 l3,0" fill="none" stroke="#c08878" stroke-width="2.4" stroke-linecap="round"/><ellipse cx="1386" cy="664" rx="18" ry="17" fill="#e7e8d6"/><ellipse cx="1386" cy="664" rx="5" ry="5" fill="#f0d0c8"/><path d="M1392,684 C1384,700 1374,716 1372,728 C1380,724 1388,706 1392,690 M1394,684 C1402,700 1412,716 1410,730 C1402,722 1396,704 1394,690 M1392,684 1388,744" fill="none" stroke="#a8705e" stroke-width="2" stroke-linecap="round"/><path d="M1172,622 C1190,600 1220,588 1256,580 C1280,590 1300,600 1312,620 L1300,650 L1230,660 L1196,646 C1184,640 1176,632 1172,622Z" fill="#c6b29e" stroke="#a4d8c8" stroke-width="3"/><path d="M1236,700 C1238,670 1256,640 1290,622 L1314,640 C1312,660 1304,690 1298,704 C1278,708 1258,712 1246,730 C1240,724 1236,712 1236,700Z" fill="#d4b498"/><path d="M1222,716 C1228,720 1234,722 1238,722 C1236,760 1238,800 1236,830 L1216,834 C1220,800 1222,760 1222,716Z" fill="#d2b092"/><path d="M1106,667 C1120,648 1150,638 1193,641 C1225,650 1240,690 1237,720 C1228,750 1218,765 1215,764 C1220,780 1226,796 1226,808 C1224,820 1220,828 1215,834 C1200,836 1186,834 1171,829 C1155,824 1142,815 1132,803 C1120,790 1112,776 1110,764 C1104,750 1101,735 1101,720 C1100,700 1102,682 1106,667Z" fill="#c4905a"/><path d="M1193,641 C1196,625 1200,616 1206,611 C1222,602 1240,602 1259,604 C1276,606 1292,610 1302,617 C1312,626 1316,638 1313,648 C1308,662 1296,674 1281,685 C1266,698 1250,710 1237,720 C1226,740 1218,756 1215,764 C1200,750 1190,720 1188,690 C1188,670 1190,655 1193,641Z" fill="#e1a860"/><path d="M1216,650 C1236,630 1262,622 1290,626 M1206,676 C1224,660 1250,650 1280,648 M1200,700 C1216,690 1236,684 1262,680" fill="none" stroke="#cf9850" stroke-width="1.6" stroke-linecap="round" opacity=".8"/><path d="M1232,806 C1260,794 1300,788 1345,790 C1390,792 1420,802 1442,818 L1444,1000 C1444,1030 1442,1050 1440,1056 L1432,1110 L1215,1110 L1196,1062 C1200,1020 1202,980 1202,940 C1203,880 1212,836 1232,806Z" fill="#bfc9b0"/><path d="M1202,880 C1196,930 1194,990 1196,1062 L1212,1090 L1218,1040 L1216,860Z" fill="#d6dc7e"/><path d="M1440,900 L1452,900 L1458,1030 L1452,1060 L1440,1056Z" fill="#d6dc7e"/><path d="M1236,780 C1260,790 1290,800 1320,800 L1300,850 C1270,840 1248,820 1232,806Z" fill="#a3dcc3"/><path d="M1250,800 C1280,810 1320,845 1340,884 L1300,900 C1280,872 1255,845 1236,830Z" fill="#b4dcc9"/><path d="M1296,792 C1316,786 1340,786 1356,792 L1350,880 L1324,890 L1304,860Z" fill="#c6e6c8"/><path d="M1302,900 L1350,900 L1352,1000 L1296,1010Z" fill="#c2e8c8"/><path d="M1324,808 C1336,780 1356,762 1381,755 C1400,750 1412,750 1423,751 C1440,752 1450,758 1456,764 C1464,774 1468,786 1467,797 C1470,820 1470,840 1466,860 C1462,880 1452,894 1440,900 C1400,904 1350,902 1330,884 C1316,864 1316,832 1324,808Z" fill="#e1a860"/><path d="M1423,751 C1440,752 1450,758 1456,764 C1464,774 1468,786 1467,797 C1470,820 1470,840 1466,860 C1462,880 1452,894 1440,900 L1416,900 C1440,880 1452,830 1423,751Z" fill="#c4905a" opacity=".75"/><ellipse cx="1368" cy="850" rx="34" ry="40" fill="#e6b068" opacity=".6"/><path d="M1322,884 C1306,874 1284,872 1269,886 C1273,902 1280,916 1290,925 C1302,918 1314,906 1322,896 C1332,902 1348,913 1362,920 C1368,908 1371,894 1369,880 C1352,872 1336,876 1322,884Z" fill="#a97a5a"/><path d="M1318,896 L1290,936 L1306,946 L1325,902Z M1325,900 L1338,944 L1354,936 L1333,896Z" fill="#a97a5a"/><path d="M1280,890 C1296,892 1310,890 1320,888 M1326,888 C1340,884 1354,884 1364,886" fill="none" stroke="#8a5e44" stroke-width="1.2" stroke-linecap="round"/><ellipse cx="1295" cy="982" rx="25.5" ry="31" fill="#bdeac4"/><ellipse cx="1349" cy="973" rx="27" ry="40" fill="#bdeac4"/><path d="M1318,1010 L1326,1010 L1326,1050 L1318,1050Z" fill="#8ccdc0"/><path d="M1204,946 C1240,950 1290,990 1322,1044 L1340,1076 L1284,1102 C1256,1092 1226,1078 1212,1062Z" fill="#bcc6ae"/><path d="M1444,936 C1410,944 1352,992 1324,1040 L1312,1074 L1366,1092 C1400,1084 1430,1066 1442,1050Z" fill="#c0cab2"/><path d="M1210,956 C1250,975 1296,1010 1320,1046 M1440,946 C1400,968 1350,1006 1326,1042 M1236,870 C1232,900 1228,930 1226,950 M1424,860 C1428,900 1432,925 1436,944 M1220,1000 C1250,1016 1280,1040 1296,1060" fill="none" stroke="#a2a896" stroke-width="1.2" stroke-linecap="round"/><path d="M1278,1066 C1290,1056 1304,1052 1318,1056 L1316,1100 L1290,1102Z" fill="#c8b6a2"/><path d="M1316,1052 C1336,1044 1356,1048 1369,1058 L1362,1090 L1320,1094Z" fill="#cbb9a4"/><path d="M1286,1064 l6,30 M1296,1058 l6,36 M1306,1056 l4,38 M1330,1050 l-2,38 M1342,1050 l2,38 M1354,1052 l4,34" fill="none" stroke="#b09a88" stroke-width="1.1" stroke-linecap="round"/><ellipse cx="1330" cy="1094" rx="23" ry="17" fill="#d6e2b8"/><path d="M1196,1062 C1230,1086 1280,1104 1330,1110 C1380,1106 1420,1086 1440,1054 C1456,1090 1472,1130 1482,1174 L1160,1174 C1172,1140 1184,1100 1196,1062Z" fill="#a2d9c9"/><path d="M1226,1066 C1250,1090 1290,1108 1308,1110 L1306,1174 L1210,1174Z" fill="#bfe4c5"/><path d="M1346,1108 C1380,1100 1420,1080 1434,1066 L1450,1174 L1350,1174Z" fill="#bfe4c5"/><path d="M1308,1112 L1312,1174 M1346,1110 L1344,1174 M1200,1080 L1180,1174 M1440,1070 L1466,1174 M1226,1068 C1222,1100 1216,1140 1212,1174" fill="none" stroke="#84c4b6" stroke-width="1.4" stroke-linecap="round"/><path d="M1168,842 L1204,838 L1202,880 L1200,924 L1196,969 L1196,1032 L1182,1026 C1166,1014 1150,1010 1138,1011 C1118,1012 1098,1020 1080,1034 C1082,1018 1088,1008 1093,1004 L1107,969 L1146,924 L1150,900 L1170,884Z" fill="#968b56"/><path d="M1152,986 L1200,958 L1196,1032 L1182,1026 C1172,1016 1160,1012 1146,1010Z" fill="#ab9658"/><path d="M1110,990 C1140,974 1170,960 1198,948" fill="none" stroke="#7c7444" stroke-width="1.6" stroke-linecap="round"/><path d="M1442,895 C1452,897 1458,900 1462,902 C1472,916 1478,932 1484,946 C1494,960 1504,976 1511,991 C1516,1002 1520,1012 1524,1022 L1526,1046 C1500,1034 1470,1028 1444,1030Z" fill="#968b56"/><path d="M1080,1034 C1098,1020 1118,1012 1138,1011 C1156,1010 1172,1016 1186,1026 L1196,1032 C1198,1080 1190,1120 1172,1140 C1142,1152 1102,1150 1080,1130 C1062,1105 1062,1065 1080,1034Z" fill="#fbe99e"/><path d="M1086,1036 C1104,1022 1140,1014 1182,1030" fill="none" stroke="#f0c88c" stroke-width="4" opacity=".8"/><path d="M1444,1030 C1470,1028 1500,1034 1526,1046 C1540,1070 1545,1120 1540,1174 L1472,1174 C1468,1130 1456,1080 1446,1040Z" fill="#fbe99e"/><path d="M1464,1142 L1545,1142 L1545,1174 L1464,1174Z" fill="#d8d874" opacity=".0"/></g><rect x="931.5" y="226.5" width="722" height="948" fill="none" stroke="#1b1d24" stroke-width="1.6"/><rect x="931.5" y="226.5" width="722" height="948" fill="none" stroke="#d5d8ea" stroke-width="1.6" stroke-dasharray="7.5 7.5"/></svg></div>
<div class="b" style="left:701.5px;top:68.0px;width:288.5px;height:75.0px;background:rgba(28,31,38,.82);border-radius:6px;"></div>
<div class="t" style="top:70.5px;height:40px;line-height:40px;color:#a9afbc;right:1716.5px;"><span style="font-size:18.81px;letter-spacing:0.028px">Bbox:</span></div>
<div class="t" style="top:70.5px;height:40px;line-height:40px;color:#c6cad2;font-weight:700;left:857.5px;"><span style="font-size:18.81px;letter-spacing:0.117px">1024×1344 px</span></div>
<div class="t" style="top:101.5px;height:40px;line-height:40px;color:#a9afbc;right:1716.5px;"><span style="font-size:18.81px;letter-spacing:0.042px">Scaled Bbox:</span></div>
<div class="t" style="top:101.5px;height:40px;line-height:40px;color:#c6cad2;font-weight:700;left:857.5px;"><span style="font-size:18.81px;letter-spacing:0.117px">1024×1344 px</span></div>
<div class="b" style="left:1780.5px;top:68.0px;width:44.5px;height:45.0px;background:#8d95a5;border-radius:5px;"></div>
<svg class="i" style="left:1791.5px;top:79.5px;color:#16181d;" width="22" height="22" viewBox="0 0 256 256"><circle cx="128" cy="60" r="17" fill="currentColor"/><circle cx="128" cy="128" r="17" fill="currentColor"/><circle cx="128" cy="196" r="17" fill="currentColor"/></svg>
<div class="b" style="left:922.6px;top:217.6px;width:18.8px;height:18.8px;background:#d5d8ea;border-radius:5px;border:1.5px solid #1b1d24;box-sizing:border-box;"></div>
<div class="b" style="left:1643.6px;top:217.6px;width:18.8px;height:18.8px;background:#d5d8ea;border-radius:5px;border:1.5px solid #1b1d24;box-sizing:border-box;"></div>
<div class="b" style="left:922.6px;top:1164.6px;width:18.8px;height:18.8px;background:#d5d8ea;border-radius:5px;border:1.5px solid #1b1d24;box-sizing:border-box;"></div>
<div class="b" style="left:1643.6px;top:1164.6px;width:18.8px;height:18.8px;background:#d5d8ea;border-radius:5px;border:1.5px solid #1b1d24;box-sizing:border-box;"></div>
<div class="b" style="left:1269.2px;top:220.2px;width:46.5px;height:13.5px;background:#d5d8ea;border-radius:5px;border:1.5px solid #1b1d24;box-sizing:border-box;"></div>
<div class="b" style="left:1269.2px;top:1167.2px;width:46.5px;height:13.5px;background:#d5d8ea;border-radius:5px;border:1.5px solid #1b1d24;box-sizing:border-box;"></div>
<div class="b" style="left:925.2px;top:676.8px;width:13.5px;height:46.5px;background:#d5d8ea;border-radius:5px;border:1.5px solid #1b1d24;box-sizing:border-box;"></div>
<div class="b" style="left:1646.2px;top:676.8px;width:13.5px;height:46.5px;background:#d5d8ea;border-radius:5px;border:1.5px solid #1b1d24;box-sizing:border-box;"></div>
<div class="b" style="left:707.0px;top:450.0px;width:45.0px;height:314.0px;background:#8d95a5;border-radius:5px;"></div>
<div class="b" style="left:707.0px;top:674.5px;width:45.0px;height:45.0px;background:#45b0e8;"></div>
<svg class="i" style="left:719.0px;top:462.0px;color:#16181d;" width="21" height="21" viewBox="0 0 256 256"><path d="M16,224c26-2 36-18 36-46a54,54 0 1 1 54,54c-30,0-60-2-90-8Z" fill="none" stroke="currentColor" stroke-width="24" stroke-linecap="round" stroke-linejoin="round"/><path d="M106,126C130,84 190,30 238,28 236,76 182,138 140,160" fill="none" stroke="currentColor" stroke-width="24" stroke-linecap="round" stroke-linejoin="round"/></svg><svg class="i" style="left:719.0px;top:507.0px;color:#16181d;" width="21" height="21" viewBox="0 0 256 256"><path d="M92,216 36,160a16,16 0 0 1 0-22L142,32a16,16 0 0 1 22,0l60,60a16,16 0 0 1 0,22L122,216 M224,216H92 M76,98 164,186" fill="none" stroke="currentColor" stroke-width="24" stroke-linecap="round" stroke-linejoin="round"/></svg><svg class="i" style="left:719.0px;top:552.0px;color:#16181d;" width="21" height="21" viewBox="0 0 256 256"><rect x="32" y="48" width="192" height="160" rx="8" fill="none" stroke="currentColor" stroke-width="24" stroke-linejoin="round"/></svg><svg class="i" style="left:719.0px;top:597.0px;color:#16181d;" width="21" height="21" viewBox="0 0 256 256"><path d="M40,40 92,216 124,146 192,214 214,192 146,124 216,92Z" fill="none" stroke="currentColor" stroke-width="22" stroke-linecap="round" stroke-linejoin="round"/></svg><svg class="i" style="left:719.0px;top:642.0px;color:#16181d;" width="21" height="21" viewBox="0 0 256 256"><path d="M64,140V68a20,20 0 0 1 40,0v52 M104,116V44a20,20 0 0 1 40,0v72 M144,116V60a20,20 0 0 1 40,0v76 M184,136V100a20,20 0 0 1 40,0v52a80,80 0 0 1-160,0c0-12-14-34-26-54a20,20 0 0 1 34-20l14,24" fill="none" stroke="currentColor" stroke-width="24" stroke-linecap="round" stroke-linejoin="round"/></svg><svg class="i" style="left:719.0px;top:687.0px;color:#16181d;" width="21" height="21" viewBox="0 0 256 256"><rect x="32" y="32" width="48" height="48" rx="8" fill="none" stroke="currentColor" stroke-width="24" stroke-linejoin="round"/><rect x="176" y="32" width="48" height="48" rx="8" fill="none" stroke="currentColor" stroke-width="24" stroke-linejoin="round"/><rect x="32" y="176" width="48" height="48" rx="8" fill="none" stroke="currentColor" stroke-width="24" stroke-linejoin="round"/><rect x="176" y="176" width="48" height="48" rx="8" fill="none" stroke="currentColor" stroke-width="24" stroke-linejoin="round"/><path d="M80,56H176 M80,200H176 M56,80V176 M200,80V176" fill="none" stroke="currentColor" stroke-width="24" stroke-linecap="round" stroke-linejoin="round"/></svg><svg class="i" style="left:719.0px;top:732.0px;color:#16181d;" width="21" height="21" viewBox="0 0 256 256"><path d="M176,108 78,206a20,20 0 0 1-18,5l-22,9 9-22a20,20 0 0 1 5-18L150,82 M120,72 186,138 M140,76l22-24a32,32 0 0 1 46,46l-24,22" fill="none" stroke="currentColor" stroke-width="22" stroke-linecap="round" stroke-linejoin="round"/></svg>
<div class="b" style="left:707.0px;top:774.0px;width:45.0px;height:54.0px;background:#8d95a5;border-radius:5px 5px 0 0;"></div>
<svg class="i" style="left:719.0px;top:790.0px;color:#16181d;" width="21" height="21" viewBox="0 0 256 256"><path d="M32,80H88 M136,80H224 M32,176H136 M184,176H224" fill="none" stroke="currentColor" stroke-width="24" stroke-linecap="round" stroke-linejoin="round"/><circle cx="112" cy="80" r="22" fill="none" stroke="currentColor" stroke-width="24"/><circle cx="160" cy="176" r="22" fill="none" stroke="currentColor" stroke-width="24"/></svg>
<div class="b" style="left:707.0px;top:827.5px;width:45.0px;height:54.5px;background:#e1f50a;"></div>
<svg class="i" style="left:718.5px;top:843.5px;color:#16181d;" width="22" height="22" viewBox="0 0 256 256"><path d="M197.58,129.06,146,110l-19-51.62a15.92,15.92,0,0,0-29.88,0L78,110l-51.62,19a15.92,15.92,0,0,0,0,29.88L78,178l19,51.62a15.92,15.92,0,0,0,29.88,0L146,178l51.62-19a15.92,15.92,0,0,0,0-29.88ZM144,40a8,8,0,0,1,8-8h16V16a8,8,0,0,1,16,0V32h16a8,8,0,0,1,0,16H184V64a8,8,0,0,1-16,0V48H152A8,8,0,0,1,144,40ZM248,88a8,8,0,0,1-8,8h-8v8a8,8,0,0,1-16,0V96h-8a8,8,0,0,1,0-16h8V72a8,8,0,0,1,16,0v8h8A8,8,0,0,1,248,88Z" fill="currentColor"/></svg>
<div class="b" style="left:707.0px;top:881.5px;width:45.0px;height:54.5px;background:#5a6272;"></div>
<svg class="i" style="left:719.5px;top:898.5px;color:#434956;" width="20" height="20" viewBox="0 0 256 256"><path d="M200,56 56,200 M200,200 56,56" fill="none" stroke="currentColor" stroke-width="24" stroke-linecap="round" stroke-linejoin="round"/></svg>
<div class="b" style="left:707.0px;top:935.5px;width:45.0px;height:53.0px;background:#c56e6b;border-radius:0 0 5px 5px;"></div>
<svg class="i" style="left:719.0px;top:951.5px;color:#16181d;" width="21" height="21" viewBox="0 0 256 256"><path d="M100,24H156 M40,60H216 M200,60V208a8,8 0 0 1-8,8H64a8,8 0 0 1-8-8V60" fill="none" stroke="currentColor" stroke-width="24" stroke-linecap="round" stroke-linejoin="round"/></svg>
<div class="b" style="left:1775.0px;top:612.0px;width:45.0px;height:216.0px;background:#8d95a5;border-radius:5px;"></div>
<svg class="i" style="left:1787.0px;top:709.0px;color:#16181d;" width="21" height="21" viewBox="0 0 256 256"><rect x="72" y="40" width="152" height="136" rx="8" fill="none" stroke="currentColor" stroke-width="24" stroke-linejoin="round"/><circle cx="168" cy="92" r="13" fill="currentColor"/><path d="M184,176v32a8,8 0 0 1-8,8H40a8,8 0 0 1-8-8V88a8,8 0 0 1 8-8H72 M72,150 112,110a8,8 0 0 1 11,0L188,176" fill="none" stroke="currentColor" stroke-width="24" stroke-linecap="round" stroke-linejoin="round"/></svg>
<div class="b" style="left:1837.5px;top:18.0px;width:3.0px;height:1404.0px;background:#2e323b;"></div>
<div class="b" style="left:1833.0px;top:700.0px;width:11.0px;height:40.0px;background:#16181d;"></div>
<div class="b" style="left:1835.0px;top:704.0px;width:2.0px;height:2.0px;background:#5a6272;border-radius:1px;"></div>
<div class="b" style="left:1835.0px;top:710.0px;width:2.0px;height:2.0px;background:#5a6272;border-radius:1px;"></div>
<div class="b" style="left:1835.0px;top:716.0px;width:2.0px;height:2.0px;background:#5a6272;border-radius:1px;"></div>
<div class="b" style="left:1835.0px;top:722.0px;width:2.0px;height:2.0px;background:#5a6272;border-radius:1px;"></div>
<div class="b" style="left:1835.0px;top:728.0px;width:2.0px;height:2.0px;background:#5a6272;border-radius:1px;"></div>
<div class="b" style="left:1835.0px;top:734.0px;width:2.0px;height:2.0px;background:#5a6272;border-radius:1px;"></div>
<div class="b" style="left:1840.0px;top:704.0px;width:2.0px;height:2.0px;background:#5a6272;border-radius:1px;"></div>
<div class="b" style="left:1840.0px;top:710.0px;width:2.0px;height:2.0px;background:#5a6272;border-radius:1px;"></div>
<div class="b" style="left:1840.0px;top:716.0px;width:2.0px;height:2.0px;background:#5a6272;border-radius:1px;"></div>
<div class="b" style="left:1840.0px;top:722.0px;width:2.0px;height:2.0px;background:#5a6272;border-radius:1px;"></div>
<div class="b" style="left:1840.0px;top:728.0px;width:2.0px;height:2.0px;background:#5a6272;border-radius:1px;"></div>
<div class="b" style="left:1840.0px;top:734.0px;width:2.0px;height:2.0px;background:#5a6272;border-radius:1px;"></div>
<div class="b" style="left:1847.0px;top:18.0px;width:143.5px;height:48.0px;border-radius:6px 6px 0 0;border:1px solid #434956;border-bottom:none;box-sizing:border-box;"></div>
<div class="b" style="left:1990.0px;top:64.0px;width:552.0px;height:1.0px;background:#434956;"></div>
<div class="t" style="top:21.5px;height:40px;line-height:40px;color:#5ab4e6;font-weight:700;left:1919.0px;width:0;display:flex;justify-content:center;"><span style="white-space:nowrap"><span class="cj" style="font-size:18.00px">图层</span><span style="font-size:18.81px;letter-spacing:0.320px"> (6)</span></span></div>
<div class="t" style="top:21.5px;height:40px;line-height:40px;color:#a9afbc;font-weight:700;left:2063.5px;width:0;display:flex;justify-content:center;"><span style="white-space:nowrap"><span class="cj" style="font-size:18.00px">画廊</span></span></div>
<div class="t" style="top:21.5px;height:40px;line-height:40px;color:#c6cad2;font-weight:700;right:31.5px;"><span class="cj" style="font-size:18.00px">打开查看器</span></div>
<div class="t" style="top:74.5px;height:40px;line-height:40px;color:#a9afbc;font-weight:700;left:1852.0px;"><span class="cj" style="font-size:18.00px">透明度</span></div>
<div class="b" style="left:1915.0px;top:77.0px;width:114.0px;height:35.5px;border-radius:3px;border:1px solid #434956;box-sizing:border-box;"></div>
<div class="t" style="top:74.5px;height:40px;line-height:40px;color:#e3e5e9;left:1929.0px;"><span style="font-size:18.81px;letter-spacing:-0.090px">100%</span></div>
<svg class="i" style="left:2003.0px;top:87.5px;color:#c6cad2;" width="15" height="15" viewBox="0 0 256 256"><path d="M208,96 128,176 48,96" fill="none" stroke="currentColor" stroke-width="24" stroke-linecap="round" stroke-linejoin="round"/></svg><svg class="i" style="left:2334.0px;top:84.5px;color:#a9afbc;" width="20" height="20" viewBox="0 0 256 256"><path d="M59,52 114,194H4Z" fill="currentColor"/><circle cx="158" cy="78" r="52" fill="currentColor"/><rect x="128" y="146" width="110" height="72" rx="8" fill="currentColor"/></svg><svg class="i" style="left:2369.5px;top:84.5px;color:#a9afbc;" width="20" height="20" viewBox="0 0 256 256"><path d="M160.9,8.3 L188.6,55.7 L243.5,58.0 L207.0,99.0 L221.8,151.9 L171.5,129.8 L125.8,160.3 L131.2,105.6 L88.1,71.6 L141.8,59.8Z" fill="currentColor"/><path d="M66,124 19,176 M98,176 35,239 M176,176 113,239" fill="none" stroke="currentColor" stroke-width="16" stroke-linecap="round"/></svg><svg class="i" style="left:2405.5px;top:84.5px;color:#a9afbc;" width="20" height="20" viewBox="0 0 256 256"><rect x="32" y="48" width="192" height="160" rx="8" fill="none" stroke="currentColor" stroke-width="24" stroke-linejoin="round"/><path d="M160,84h32v32 M96,172H64V140" fill="none" stroke="currentColor" stroke-width="24" stroke-linecap="round" stroke-linejoin="round"/></svg><svg class="i" style="left:2441.0px;top:84.5px;color:#a9afbc;" width="20" height="20" viewBox="0 0 256 256"><path d="M216,91.3V208a8,8 0 0 1-8,8H48a8,8 0 0 1-8-8V48a8,8 0 0 1 8-8H164.7a8,8 0 0 1 5.6,2.3l43.4,43.4A8,8 0 0 1 216,91.3Z M80,216V152a8,8 0 0 1 8-8h80a8,8 0 0 1 8,8v64 M152,72H96" fill="none" stroke="currentColor" stroke-width="24" stroke-linecap="round" stroke-linejoin="round"/></svg><svg class="i" style="left:2477.0px;top:84.5px;color:#a9afbc;" width="20" height="20" viewBox="0 0 256 256"><rect x="36" y="84" width="136" height="136" rx="10" fill="currentColor"/><path d="M88,52V44a8,8 0 0 1 8-8H212a8,8 0 0 1 8,8V160a8,8 0 0 1-8,8h-8" fill="none" stroke="currentColor" stroke-width="22" stroke-linecap="round" stroke-linejoin="round"/></svg><svg class="i" style="left:2513.5px;top:84.5px;color:#a9afbc;" width="20" height="20" viewBox="0 0 256 256"><path d="M40,128H216 M128,40V216" fill="none" stroke="currentColor" stroke-width="24" stroke-linecap="round" stroke-linejoin="round"/></svg>
<div class="b" style="left:1847.0px;top:121.5px;width:695.0px;height:1.0px;background:#2d3139;"></div>
<div class="t" style="top:130.0px;height:40px;line-height:40px;color:#a9afbc;font-weight:700;left:1852.0px;"><span class="cj" style="font-size:18.00px">去噪强度</span></div>
<svg class="i" style="left:1936px;top:138px" width="63" height="24" viewBox="0 0 63 24"><path d="M1,11.2 C3.5,7 5.5,5.6 8,5.6 C12,5.6 15.3,16.8 19.3,16.8 C23.3,16.8 27.2,5.6 31.2,5.6 C35.2,5.6 39.2,16.8 43.2,16.8 C47.2,16.8 51.1,5.6 55.1,5.6 C57.6,5.6 59.3,8 60.8,11.2" fill="none" stroke="#52b7e8" stroke-width="1.7" stroke-linecap="round"/></svg>
<div class="b" style="left:2015.0px;top:145.5px;width:356.0px;height:9.0px;background:#8d95a5;border-radius:4.5px;"></div>
<div class="b" style="left:2358.5px;top:138.5px;width:23.0px;height:23.0px;background:#8d95a5;border-radius:50%;border:3.5px solid #c6cad2;box-sizing:border-box;"></div>
<div class="b" style="left:2385.5px;top:132.5px;width:152.0px;height:35.5px;border-radius:3px;border:1px solid #434956;box-sizing:border-box;"></div>
<div class="t" style="top:130.0px;height:40px;line-height:40px;color:#e3e5e9;left:2399.0px;"><span style="font-size:18.81px;letter-spacing:-3.125px">1</span></div>
<div class="b" style="left:2509.0px;top:133.0px;width:1.0px;height:35.0px;background:#434956;"></div>
<div class="b" style="left:2509.0px;top:150.0px;width:28.0px;height:1.0px;background:#434956;"></div>
<svg class="i" style="left:2518.5px;top:137.0px;color:#a9afbc;" width="10" height="10" viewBox="0 0 256 256"><path d="M48,160 128,80 208,160" fill="none" stroke="currentColor" stroke-width="24" stroke-linecap="round" stroke-linejoin="round"/></svg><svg class="i" style="left:2518.5px;top:155.0px;color:#e3e5e9;" width="10" height="10" viewBox="0 0 256 256"><path d="M208,96 128,176 48,96" fill="none" stroke="currentColor" stroke-width="24" stroke-linecap="round" stroke-linejoin="round"/></svg>
<div class="b" style="left:1847.0px;top:177.0px;width:695.0px;height:1.0px;background:#2d3139;"></div>
<div class="b" style="left:1847.0px;top:187.0px;width:695.0px;height:258.0px;background:#22252b;border-radius:0 0 6px 6px;"></div>
<div class="b" style="left:1856.0px;top:187.0px;width:53.5px;height:8.5px;background-color:#1e2129;background-image:conic-gradient(#2a2d35 25%,#1e2129 0 50%,#2a2d35 0 75%,#1e2129 0);background-size:9px 9px;overflow:hidden;"><div class="b" style="left:11px;top:0;width:7px;height:4px;background:#f2e04a;border-radius:0 0 4px 4px"></div>
<div class="b" style="left:33px;top:0;width:5px;height:6px;background:#f2e04a;border-radius:0 0 2px 3px"></div></div>
<div class="b" style="left:1856.5px;top:205.5px;width:676.5px;height:230.0px;border-radius:6px;border:1px solid #434956;box-sizing:border-box;"></div>
<div class="t" style="top:209.7px;height:40px;line-height:40px;color:#e3e5e9;left:1867.0px;"><span style="font-size:21.95px;letter-spacing:0.458px">cute,ahoge,silver hair,blue hair,gradient hair,sidelocks,single</span></div>
<div class="t" style="top:239.4px;height:40px;line-height:40px;color:#e3e5e9;left:1867.0px;"><span style="font-size:21.95px;letter-spacing:0.497px">drill,side ponytail,straight hair,blue</span></div>
<div class="t" style="top:269.1px;height:40px;line-height:40px;color:#e3e5e9;left:1867.0px;"><span style="font-size:21.95px;letter-spacing:0.572px">scrunchie,scrunchie,purple eyes,collared shirt,white</span></div>
<div class="t" style="top:298.8px;height:40px;line-height:40px;color:#e3e5e9;left:1867.0px;"><span style="font-size:21.95px;letter-spacing:0.505px">shirt,blue cardigan,blue sweater,blue jacket,black jacket,open</span></div>
<div class="t" style="top:328.5px;height:40px;line-height:40px;color:#e3e5e9;left:1867.0px;"><span style="font-size:21.95px;letter-spacing:0.493px">jacket,long sleeves,sleeves past wrists,pleated skirt,black</span></div>
<div class="t" style="top:358.2px;height:40px;line-height:40px;color:#e3e5e9;left:1867.0px;"><span style="font-size:21.95px;letter-spacing:0.628px">skirt,</span></div>
<div class="t" style="top:387.9px;height:40px;line-height:40px;color:#e3e5e9;left:1867.0px;"><span style="font-size:21.95px;letter-spacing:0.494px">wariza,looking at viewer,head tilt,smile,</span></div>
<svg class="i" style="left:2506.0px;top:214.0px;color:#d0706a;" width="17" height="17" viewBox="0 0 256 256"><path d="M200,56 56,200 M200,200 56,56" fill="none" stroke="currentColor" stroke-width="24" stroke-linecap="round" stroke-linejoin="round"/></svg><svg class="i" style="left:2504.0px;top:241.0px;color:#5a6272;" width="21" height="21" viewBox="0 0 256 256"><path d="M64,88 16,128 64,168 M192,88 240,128 192,168 M160,40 96,216" fill="none" stroke="currentColor" stroke-width="24" stroke-linecap="round" stroke-linejoin="round"/></svg><svg class="i" style="left:2510px;top:412.5px" width="22" height="22" viewBox="0 0 22 22"><path d="M21,1 1,21 M21,7 7,21 M21,13 13,21 M21,18 18,21" stroke="#707a8f" stroke-width="1.2" fill="none"/></svg>
<div class="b" style="left:1847.0px;top:454.0px;width:695.0px;height:334.0px;background:#22252b;border-radius:6px;"></div>
<div class="b" style="left:1856.0px;top:463.0px;width:53.5px;height:53.5px;border-radius:3px;background-color:#1e2129;background-image:conic-gradient(#2a2d35 25%,#1e2129 0 50%,#2a2d35 0 75%,#1e2129 0);background-size:9px 9px;overflow:hidden;outline:1px solid #2d3139;"><svg class="i" style="left:0;top:0" width="54" height="54" viewBox="0 0 54 54"><path d="M20,2c6-2 12-1 15,2 2,4 1,9-1,12 3,8 3,20 4,30 1,4-3,5-8,5H18c-4,0-5-3-3-6 2-8 1-18 1-26-2-3-3-7-1-11 1-3 2-5 5-6Z" fill="#7bdc7c"/></svg></div>
<div class="t" style="top:470.0px;height:40px;line-height:40px;color:#a9afbc;font-weight:700;left:1920.0px;"><span class="cj" style="font-size:18.00px">区域导向</span></div>
<svg class="i" style="left:2398.0px;top:481.0px;color:#a9afbc;" width="18" height="18" viewBox="0 0 256 256"><path d="M192,224 128,184 64,224V48a8,8 0 0 1 8-8H184a8,8 0 0 1 8,8Z" fill="none" stroke="currentColor" stroke-width="24" stroke-linecap="round" stroke-linejoin="round"/></svg><svg class="i" style="left:2433.5px;top:479.5px;color:#a9afbc;" width="19" height="19" viewBox="0 0 256 256"><rect x="40" y="96" width="176" height="120" rx="10" fill="none" stroke="currentColor" stroke-width="24" stroke-linejoin="round"/><path d="M88,96V60a40,40 0 0 1 80,0" fill="none" stroke="currentColor" stroke-width="24" stroke-linecap="round" stroke-linejoin="round"/></svg><svg class="i" style="left:2469.5px;top:481.0px;color:#a9afbc;" width="18" height="18" viewBox="0 0 256 256"><circle cx="128" cy="128" r="104" fill="currentColor"/></svg><svg class="i" style="left:2505.5px;top:480.5px;color:#d0706a;" width="19" height="19" viewBox="0 0 256 256"><path d="M100,22H156" fill="none" stroke="currentColor" stroke-width="24" stroke-linecap="round" stroke-linejoin="round"/><path d="M36,48H220a10,10 0 0 1 0,22H208V208a16,16 0 0 1-16,16H64a16,16 0 0 1-16-16V70H36a10,10 0 0 1 0-22Z" fill="currentColor"/></svg>
<div class="b" style="left:1856.5px;top:526.0px;width:676.5px;height:252.5px;border-radius:6px;border:1px solid #434956;box-sizing:border-box;"></div>
<div class="t" style="top:527.0px;height:40px;line-height:40px;color:#e3e5e9;left:1867.0px;"><span style="font-size:21.95px;letter-spacing:0.571px">cute,loli,cherry blossoms,hair flower,pink flower,hair</span></div>
<div class="t" style="top:556.8px;height:40px;line-height:40px;color:#e3e5e9;left:1867.0px;"><span style="font-size:21.95px;letter-spacing:0.483px">ribbon,cat ears,animal ear fluff,grey hair,short hair,bangs,blue</span></div>
<div class="t" style="top:586.5px;height:40px;line-height:40px;color:#e3e5e9;left:1867.0px;"><span style="font-size:21.95px;letter-spacing:0.490px">eyes,hair between eyes,eyebrows visible through</span></div>
<div class="t" style="top:616.2px;height:40px;line-height:40px;color:#e3e5e9;left:1867.0px;"><span style="font-size:21.95px;letter-spacing:0.514px">hair,blush,white shirt,white sailor collar,red bow,pink</span></div>
<div class="t" style="top:646.0px;height:40px;line-height:40px;color:#e3e5e9;left:1867.0px;"><span style="font-size:21.95px;letter-spacing:0.525px">cardigan,very long sleeves,red bowtie,light blue skirt,pleated</span></div>
<div class="t" style="top:675.8px;height:40px;line-height:40px;color:#e3e5e9;left:1867.0px;"><span style="font-size:21.95px;letter-spacing:0.600px">skirt,flat chest,white thighhighs,</span></div>
<div class="t" style="top:705.5px;height:40px;line-height:40px;color:#e3e5e9;left:1867.0px;"><span style="font-size:21.95px;letter-spacing:0.537px">sitting,knees up,looking at viewer,hugging own legs,parted</span></div>
<div class="t" style="top:735.2px;height:40px;line-height:40px;color:#e3e5e9;left:1867.0px;"><span style="font-size:21.95px;letter-spacing:0.432px">lips,</span></div>
<svg class="i" style="left:2506.5px;top:535.5px;color:#d0706a;" width="17" height="17" viewBox="0 0 256 256"><path d="M200,56 56,200 M200,200 56,56" fill="none" stroke="currentColor" stroke-width="24" stroke-linecap="round" stroke-linejoin="round"/></svg><svg class="i" style="left:2504.5px;top:562.5px;color:#5a6272;" width="21" height="21" viewBox="0 0 256 256"><path d="M64,88 16,128 64,168 M192,88 240,128 192,168 M160,40 96,216" fill="none" stroke="currentColor" stroke-width="24" stroke-linecap="round" stroke-linejoin="round"/></svg><svg class="i" style="left:2510px;top:755.5px" width="22" height="22" viewBox="0 0 22 22"><path d="M21,1 1,21 M21,7 7,21 M21,13 13,21 M21,18 18,21" stroke="#707a8f" stroke-width="1.2" fill="none"/></svg><svg class="i" style="left:1848.5px;top:807.5px;color:#a9afbc;" width="16" height="16" viewBox="0 0 256 256"><path d="M208,96 128,176 48,96" fill="none" stroke="currentColor" stroke-width="24" stroke-linecap="round" stroke-linejoin="round"/></svg>
<div class="t" style="top:795.5px;height:40px;line-height:40px;color:#a9afbc;font-weight:700;left:1879.0px;"><span class="cj" style="font-size:18.00px">控制图层（</span><span style="font-size:18.81px;letter-spacing:-2.844px">1</span><span class="cj" style="font-size:18.00px">个）</span></div>
<svg class="i" style="left:2442.5px;top:806.0px;color:#7b8496;" width="18" height="18" viewBox="0 0 256 256"><path d="M128,28 232,84 128,140 24,84Z M24,128 128,184 232,128 M24,172 128,228 232,172" fill="none" stroke="currentColor" stroke-width="18" stroke-linecap="round" stroke-linejoin="round"/></svg><svg class="i" style="left:2477.5px;top:805.0px;color:#a9afbc;" width="20" height="20" viewBox="0 0 256 256"><path d="M128,56C48,56 16,128 16,128s32,72 112,72 112-72 112-72S208,56 128,56Z" fill="none" stroke="currentColor" stroke-width="24" stroke-linecap="round" stroke-linejoin="round"/><circle cx="128" cy="128" r="34" fill="none" stroke="currentColor" stroke-width="24"/></svg><svg class="i" style="left:2514.5px;top:805.5px;color:#a9afbc;" width="19" height="19" viewBox="0 0 256 256"><rect x="52" y="28" width="152" height="200" rx="14" fill="currentColor"/><path d="M84,88V72a8,8 0 0 1 8-8h14 M150,64h14a8,8 0 0 1 8,8v16 M172,168v16a8,8 0 0 1-8,8h-14 M106,192H92a8,8 0 0 1-8-8V168 M84,116v24 M172,116v24" fill="none" stroke="#16181d" stroke-width="14" opacity=".75"/></svg>
<div class="b" style="left:1847.0px;top:842.0px;width:695.0px;height:282.5px;background:#2d3139;border-radius:6px;"></div>
<div class="b" style="left:1856.0px;top:851.0px;width:53.5px;height:53.5px;border-radius:3px;background-color:#1e2129;background-image:conic-gradient(#2a2d35 25%,#1e2129 0 50%,#2a2d35 0 75%,#1e2129 0);background-size:9px 9px;overflow:hidden;outline:1px solid #2d3139;"><svg class="i" style="left:0;top:0" width="54" height="54" viewBox="0 0 54 54"><ellipse cx="29" cy="10" rx="9" ry="9.5" fill="#e9e9f7"/><path d="M34,5c3,0 4,3 3.5,5l-3-0.5Z" fill="#4a6ae0"/><path d="M33,18c4,0 6,4 5,8l-4-1Z" fill="#a8dcf4"/><path d="M21,22c4-2 12-2 16,1l1,16-4,6H20l-5-8Z" fill="#343858"/><ellipse cx="27" cy="24.5" rx="5.5" ry="5.5" fill="#f0e8f0"/><path d="M20,32h15l1,21H20Z" fill="#f0bccb"/><path d="M26,34h4v18h-4Z" fill="#fbeef2"/><path d="M25,34h6l-1,4h-4Z" fill="#c83448"/><path d="M36,43h5v9h-5Z" fill="#f4e6e6"/></svg></div>
<div class="t" style="top:858.5px;height:40px;line-height:40px;color:#e3e5e9;font-weight:700;left:1920.0px;"><span class="cj" style="font-size:18.00px">控制层</span></div>
<div class="b" style="left:2317.0px;top:866.0px;width:63.0px;height:23.5px;border-radius:3px;border:1px solid #5a6272;box-sizing:border-box;"></div>
<div class="t" style="top:857.5px;height:40px;line-height:40px;color:#c6cad2;left:2348.5px;width:0;display:flex;justify-content:center;"><span style="white-space:nowrap"><span class="cj" style="font-size:14.50px">透明度</span></span></div>
<svg class="i" style="left:2398.0px;top:869.0px;color:#a9afbc;" width="18" height="18" viewBox="0 0 256 256"><path d="M192,224 128,184 64,224V48a8,8 0 0 1 8-8H184a8,8 0 0 1 8,8Z" fill="none" stroke="currentColor" stroke-width="24" stroke-linecap="round" stroke-linejoin="round"/></svg><svg class="i" style="left:2433.5px;top:867.5px;color:#a9afbc;" width="19" height="19" viewBox="0 0 256 256"><rect x="40" y="96" width="176" height="120" rx="10" fill="none" stroke="currentColor" stroke-width="24" stroke-linejoin="round"/><path d="M88,96V60a40,40 0 0 1 80,0" fill="none" stroke="currentColor" stroke-width="24" stroke-linecap="round" stroke-linejoin="round"/></svg><svg class="i" style="left:2469.5px;top:869.0px;color:#a9afbc;" width="18" height="18" viewBox="0 0 256 256"><circle cx="128" cy="128" r="104" fill="currentColor"/></svg><svg class="i" style="left:2505.5px;top:868.5px;color:#d0706a;" width="19" height="19" viewBox="0 0 256 256"><path d="M100,22H156" fill="none" stroke="currentColor" stroke-width="24" stroke-linecap="round" stroke-linejoin="round"/><path d="M36,48H220a10,10 0 0 1 0,22H208V208a16,16 0 0 1-16,16H64a16,16 0 0 1-16-16V70H36a10,10 0 0 1 0-22Z" fill="currentColor"/></svg>
<div class="b" style="left:1856.0px;top:914.0px;width:542.0px;height:40.5px;background:#434956;border-radius:6px;"></div>
<div class="t" style="top:914.0px;height:40px;line-height:40px;color:#e3e5e9;left:1874.5px;"><span style="font-size:18.81px;letter-spacing:0.197px">Multi-Guidance Detection (Union Pro)</span></div>
<svg class="i" style="left:2371.0px;top:927.5px;color:#e3e5e9;" width="15" height="15" viewBox="0 0 256 256"><path d="M208,96 128,176 48,96" fill="none" stroke="currentColor" stroke-width="24" stroke-linecap="round" stroke-linejoin="round"/></svg><svg class="i" style="left:2415.0px;top:924.5px;color:#a9afbc;" width="20" height="20" viewBox="0 0 256 256"><path d="M160.9,8.3 L188.6,55.7 L243.5,58.0 L207.0,99.0 L221.8,151.9 L171.5,129.8 L125.8,160.3 L131.2,105.6 L88.1,71.6 L141.8,59.8Z" fill="currentColor"/><path d="M66,124 19,176 M98,176 35,239 M176,176 113,239" fill="none" stroke="currentColor" stroke-width="16" stroke-linecap="round"/></svg><svg class="i" style="left:2460.0px;top:924.5px;color:#a9afbc;" width="20" height="20" viewBox="0 0 256 256"><rect x="32" y="32" width="48" height="48" rx="8" fill="none" stroke="currentColor" stroke-width="24" stroke-linejoin="round"/><rect x="176" y="32" width="48" height="48" rx="8" fill="none" stroke="currentColor" stroke-width="24" stroke-linejoin="round"/><rect x="32" y="176" width="48" height="48" rx="8" fill="none" stroke="currentColor" stroke-width="24" stroke-linejoin="round"/><rect x="176" y="176" width="48" height="48" rx="8" fill="none" stroke="currentColor" stroke-width="24" stroke-linejoin="round"/><path d="M80,56H176 M80,200H176 M56,80V176 M200,80V176" fill="none" stroke="currentColor" stroke-width="24" stroke-linecap="round" stroke-linejoin="round"/></svg><svg class="i" style="left:2505.0px;top:924.0px;color:#a9afbc;" width="20" height="20" viewBox="0 0 256 256"><path d="M86,80 128,38 170,80 M128,38V150 M176,120h48a8,8 0 0 1 8,8v72a8,8 0 0 1-8,8H32a8,8 0 0 1-8-8V128a8,8 0 0 1 8-8H80" fill="none" stroke="currentColor" stroke-width="24" stroke-linecap="round" stroke-linejoin="round"/><circle cx="188" cy="164" r="14" fill="currentColor"/></svg>
<div class="t" style="top:969.5px;height:40px;line-height:40px;color:#a9afbc;font-weight:700;right:643.0px;"><span style="font-size:18.81px;letter-spacing:-0.141px">Weight</span></div>
<div class="b" style="left:1936.0px;top:985.5px;width:489.0px;height:9.0px;background:#5a6272;border-radius:4.5px;"></div>
<div class="b" style="left:1936.0px;top:985.5px;width:186.5px;height:9.0px;background:#8d95a5;border-radius:4.5px;"></div>
<div class="b" style="left:2111.0px;top:978.5px;width:23.0px;height:23.0px;background:#8d95a5;border-radius:50%;border:3.5px solid #c6cad2;box-sizing:border-box;box-shadow:0 1px 3px rgba(0,0,0,.4);"></div>
<div class="b" style="left:2443.0px;top:969.0px;width:90.0px;height:41.5px;background:#434956;border-radius:6px;"></div>
<div class="t" style="top:969.5px;height:40px;line-height:40px;color:#e3e5e9;left:2457.0px;"><span style="font-size:18.81px;letter-spacing:0.055px">0.75</span></div>
<svg class="i" style="left:2512.0px;top:973.5px;color:#a9afbc;" width="12" height="12" viewBox="0 0 256 256"><path d="M48,160 128,80 208,160" fill="none" stroke="currentColor" stroke-width="24" stroke-linecap="round" stroke-linejoin="round"/></svg><svg class="i" style="left:2512.0px;top:993.5px;color:#a9afbc;" width="12" height="12" viewBox="0 0 256 256"><path d="M208,96 128,176 48,96" fill="none" stroke="currentColor" stroke-width="24" stroke-linecap="round" stroke-linejoin="round"/></svg>
<div class="t" style="top:1025.0px;height:40px;line-height:40px;color:#a9afbc;font-weight:700;right:593.0px;"><span style="font-size:18.81px;letter-spacing:-0.253px">Begin/End %</span></div>
<div class="b" style="left:1990.0px;top:1041.0px;width:533.5px;height:9.0px;background:#5a6272;border-radius:4.5px;"></div>
<div class="b" style="left:1990.5px;top:1041.0px;width:268.0px;height:9.0px;background:#8d95a5;border-radius:4.5px;"></div>
<div class="b" style="left:1979.0px;top:1034.0px;width:23.0px;height:23.0px;background:#8d95a5;border-radius:50%;border:3.5px solid #c6cad2;box-sizing:border-box;box-shadow:0 1px 3px rgba(0,0,0,.4);"></div>
<div class="b" style="left:2247.0px;top:1034.0px;width:23.0px;height:23.0px;background:#8d95a5;border-radius:50%;border:3.5px solid #c6cad2;box-sizing:border-box;box-shadow:0 1px 3px rgba(0,0,0,.4);"></div>
<div class="t" style="top:1077.5px;height:40px;line-height:40px;color:#a9afbc;font-weight:700;right:586.0px;"><span style="font-size:18.81px;letter-spacing:-0.262px">Control Mode</span></div>
<div class="b" style="left:1992.0px;top:1080.0px;width:541.0px;height:36.0px;background:#434956;border-radius:6px;"></div>
<div class="t" style="top:1077.5px;height:40px;line-height:40px;color:#e3e5e9;left:2010.0px;"><span style="font-size:18.81px;letter-spacing:0.180px">Balanced (recommended)</span></div>
<svg class="i" style="left:2506.5px;top:1090.5px;color:#e3e5e9;" width="15" height="15" viewBox="0 0 256 256"><path d="M208,96 128,176 48,96" fill="none" stroke="currentColor" stroke-width="24" stroke-linecap="round" stroke-linejoin="round"/></svg>
<div class="t" style="top:1131.5px;height:40px;line-height:40px;color:#8d95a5;font-weight:700;left:1879.0px;"><span class="cj" style="font-size:18.00px">栅格图层（</span><span style="font-size:18.81px;letter-spacing:0.359px">23 </span><span class="cj" style="font-size:18.00px">个）</span></div>
<svg class="i" style="left:2442.5px;top:1142.0px;color:#7b8496;" width="18" height="18" viewBox="0 0 256 256"><path d="M128,28 232,84 128,140 24,84Z M24,128 128,184 232,128 M24,172 128,228 232,172" fill="none" stroke="currentColor" stroke-width="18" stroke-linecap="round" stroke-linejoin="round"/></svg><svg class="i" style="left:2477.5px;top:1141.0px;color:#a9afbc;" width="20" height="20" viewBox="0 0 256 256"><path d="M128,56C48,56 16,128 16,128s32,72 112,72 112-72 112-72S208,56 128,56Z" fill="none" stroke="currentColor" stroke-width="24" stroke-linecap="round" stroke-linejoin="round"/><circle cx="128" cy="128" r="34" fill="none" stroke="currentColor" stroke-width="24"/></svg><svg class="i" style="left:2514.5px;top:1141.5px;color:#a9afbc;" width="19" height="19" viewBox="0 0 256 256"><rect x="52" y="28" width="152" height="200" rx="14" fill="currentColor"/><path d="M84,88V72a8,8 0 0 1 8-8h14 M150,64h14a8,8 0 0 1 8,8v16 M172,168v16a8,8 0 0 1-8,8h-14 M106,192H92a8,8 0 0 1-8-8V168 M84,116v24 M172,116v24" fill="none" stroke="#16181d" stroke-width="14" opacity=".75"/></svg>
<div class="b" style="left:1847.0px;top:1179.0px;width:695.0px;height:72.0px;background:#22252b;border-radius:6px;"></div>
<div class="b" style="left:1856.0px;top:1188.5px;width:53.5px;height:53.5px;border-radius:3px;background-color:#1e2129;background-image:conic-gradient(#2a2d35 25%,#1e2129 0 50%,#2a2d35 0 75%,#1e2129 0);background-size:9px 9px;overflow:hidden;outline:1px solid #2d3139;"><svg class="i" style="left:0;top:0" width="54" height="54" viewBox="0 0 54 54"><rect x="0" y="1" width="47" height="52" fill="#f3c4d0"/><ellipse cx="27" cy="13" rx="8" ry="9" fill="#e6e6f4"/><path d="M32,9c4,2 4,8 3,12l-3-2Z" fill="#8fc6ee"/><path d="M18,22c5-3 14-3 19,0l3,18-6,8H21l-4-10Z" fill="#34364f"/><ellipse cx="27" cy="28" rx="6.5" ry="6.5" fill="#efe8ee"/><path d="M20,34h14l3,17H18Z" fill="#f3b9c8"/></svg></div>
<div class="t" style="top:1195.0px;height:40px;line-height:40px;color:#a9afbc;font-weight:700;left:1920.0px;"><span class="cj" style="font-size:18.00px">栅格层</span></div>
<svg class="i" style="left:2398.0px;top:1206.0px;color:#a9afbc;" width="18" height="18" viewBox="0 0 256 256"><path d="M192,224 128,184 64,224V48a8,8 0 0 1 8-8H184a8,8 0 0 1 8,8Z" fill="none" stroke="currentColor" stroke-width="24" stroke-linecap="round" stroke-linejoin="round"/></svg><svg class="i" style="left:2433.5px;top:1204.5px;color:#a9afbc;" width="19" height="19" viewBox="0 0 256 256"><rect x="40" y="96" width="176" height="120" rx="10" fill="none" stroke="currentColor" stroke-width="24" stroke-linejoin="round"/><path d="M88,96V60a40,40 0 0 1 80,0" fill="none" stroke="currentColor" stroke-width="24" stroke-linecap="round" stroke-linejoin="round"/></svg><svg class="i" style="left:2469.5px;top:1206.0px;color:#a9afbc;" width="18" height="18" viewBox="0 0 256 256"><circle cx="128" cy="128" r="104" fill="currentColor"/></svg><svg class="i" style="left:2505.5px;top:1205.5px;color:#d0706a;" width="19" height="19" viewBox="0 0 256 256"><path d="M100,22H156" fill="none" stroke="currentColor" stroke-width="24" stroke-linecap="round" stroke-linejoin="round"/><path d="M36,48H220a10,10 0 0 1 0,22H208V208a16,16 0 0 1-16,16H64a16,16 0 0 1-16-16V70H36a10,10 0 0 1 0-22Z" fill="currentColor"/></svg>
<div class="b" style="left:1847.0px;top:1260.5px;width:695.0px;height:72.0px;background:#22252b;border-radius:6px;"></div>
<div class="b" style="left:1856.0px;top:1270.0px;width:53.5px;height:53.5px;border-radius:3px;background-color:#1e2129;background-image:conic-gradient(#2a2d35 25%,#1e2129 0 50%,#2a2d35 0 75%,#1e2129 0);background-size:9px 9px;overflow:hidden;outline:1px solid #2d3139;"><svg class="i" style="left:0;top:0" width="54" height="54" viewBox="0 0 54 54"><rect x="0" y="1" width="51" height="52" fill="#f3c4d0"/><ellipse cx="22" cy="12" rx="11" ry="11" fill="#e8e8f4"/><path d="M32,2c7,2 9,18 6,30l-5-4Z" fill="#8fc6ee"/><ellipse cx="22" cy="30" rx="10" ry="9" fill="#efe6ea"/><path d="M30,34c6,0 10,4 10,14l-8,4Z" fill="#34364f"/><path d="M10,40h22l2,13H8Z" fill="#f3b9c8"/><path d="M14,44h8v9h-8Z" fill="#c8344a"/></svg></div>
<div class="t" style="top:1276.5px;height:40px;line-height:40px;color:#a9afbc;font-weight:700;left:1920.0px;"><span class="cj" style="font-size:18.00px">栅格层</span></div>
<svg class="i" style="left:2398.0px;top:1287.5px;color:#a9afbc;" width="18" height="18" viewBox="0 0 256 256"><path d="M192,224 128,184 64,224V48a8,8 0 0 1 8-8H184a8,8 0 0 1 8,8Z" fill="none" stroke="currentColor" stroke-width="24" stroke-linecap="round" stroke-linejoin="round"/></svg><svg class="i" style="left:2433.5px;top:1286.0px;color:#a9afbc;" width="19" height="19" viewBox="0 0 256 256"><rect x="40" y="96" width="176" height="120" rx="10" fill="none" stroke="currentColor" stroke-width="24" stroke-linejoin="round"/><path d="M88,96V60a40,40 0 0 1 80,0" fill="none" stroke="currentColor" stroke-width="24" stroke-linecap="round" stroke-linejoin="round"/></svg><svg class="i" style="left:2469.5px;top:1287.5px;color:#a9afbc;" width="18" height="18" viewBox="0 0 256 256"><circle cx="128" cy="128" r="92" fill="none" stroke="currentColor" stroke-width="24"/></svg><svg class="i" style="left:2505.5px;top:1287.0px;color:#d0706a;" width="19" height="19" viewBox="0 0 256 256"><path d="M100,22H156" fill="none" stroke="currentColor" stroke-width="24" stroke-linecap="round" stroke-linejoin="round"/><path d="M36,48H220a10,10 0 0 1 0,22H208V208a16,16 0 0 1-16,16H64a16,16 0 0 1-16-16V70H36a10,10 0 0 1 0-22Z" fill="currentColor"/></svg>
<div class="b" style="left:1847.0px;top:1341.5px;width:695.0px;height:72.0px;background:#22252b;border-radius:6px;"></div>
<div class="b" style="left:1856.0px;top:1351.0px;width:53.5px;height:53.5px;border-radius:3px;background-color:#1e2129;background-image:conic-gradient(#2a2d35 25%,#1e2129 0 50%,#2a2d35 0 75%,#1e2129 0);background-size:9px 9px;overflow:hidden;outline:1px solid #2d3139;"><svg class="i" style="left:0;top:0" width="54" height="54" viewBox="0 0 54 54"><rect x="0" y="12" width="54" height="3" fill="#f1b9c8"/><path d="M0,15H54V20c-6,1-10,0-14,4-4,6-10,3-14,8-4,5-12,3-16,8-3,3-6,3-10,3Z" fill="#efe3e3"/><path d="M28,16c8,0 16,0 26,1v3c-8,1-18,0-26-4Z" fill="#f6d8dc"/></svg></div>
<div class="t" style="top:1357.5px;height:40px;line-height:40px;color:#a9afbc;font-weight:700;left:1920.0px;"><span class="cj" style="font-size:18.00px">栅格层</span></div>
<svg class="i" style="left:2398.0px;top:1368.5px;color:#a9afbc;" width="18" height="18" viewBox="0 0 256 256"><path d="M192,224 128,184 64,224V48a8,8 0 0 1 8-8H184a8,8 0 0 1 8,8Z" fill="none" stroke="currentColor" stroke-width="24" stroke-linecap="round" stroke-linejoin="round"/></svg><svg class="i" style="left:2433.5px;top:1367.0px;color:#a9afbc;" width="19" height="19" viewBox="0 0 256 256"><rect x="40" y="96" width="176" height="120" rx="10" fill="none" stroke="currentColor" stroke-width="24" stroke-linejoin="round"/><path d="M88,96V60a40,40 0 0 1 80,0" fill="none" stroke="currentColor" stroke-width="24" stroke-linecap="round" stroke-linejoin="round"/></svg><svg class="i" style="left:2469.5px;top:1368.5px;color:#a9afbc;" width="18" height="18" viewBox="0 0 256 256"><circle cx="128" cy="128" r="92" fill="none" stroke="currentColor" stroke-width="24"/></svg><svg class="i" style="left:2505.5px;top:1368.0px;color:#d0706a;" width="19" height="19" viewBox="0 0 256 256"><path d="M100,22H156" fill="none" stroke="currentColor" stroke-width="24" stroke-linecap="round" stroke-linejoin="round"/><path d="M36,48H220a10,10 0 0 1 0,22H208V208a16,16 0 0 1-16,16H64a16,16 0 0 1-16-16V70H36a10,10 0 0 1 0-22Z" fill="currentColor"/></svg>
<div class="b" style="left:1525.5px;top:890.5px;width:350.5px;height:508.0px;background:#2d3139;border-radius:7px;box-shadow:0 6px 24px rgba(0,0,0,.55),0 0 0 1px rgba(0,0,0,.15);"></div>
<svg class="i" style="left:1548.5px;top:913.5px;color:#5a6272;" width="20" height="20" viewBox="0 0 256 256"><path d="M40,40H216 M128,216V88 M56,152 128,80 200,152" fill="none" stroke="currentColor" stroke-width="24" stroke-linecap="round" stroke-linejoin="round"/></svg><svg class="i" style="left:1605.5px;top:913.5px;color:#5a6272;" width="20" height="20" viewBox="0 0 256 256"><path d="M128,216V40 M56,112 128,40 200,112" fill="none" stroke="currentColor" stroke-width="24" stroke-linecap="round" stroke-linejoin="round"/></svg><svg class="i" style="left:1662.5px;top:913.5px;color:#5a6272;" width="20" height="20" viewBox="0 0 256 256"><path d="M128,40V216 M56,144 128,216 200,144" fill="none" stroke="currentColor" stroke-width="24" stroke-linecap="round" stroke-linejoin="round"/></svg><svg class="i" style="left:1719.0px;top:913.5px;color:#5a6272;" width="20" height="20" viewBox="0 0 256 256"><path d="M128,32V168 M56,104 128,176 200,104 M40,216H216" fill="none" stroke="currentColor" stroke-width="24" stroke-linecap="round" stroke-linejoin="round"/></svg><svg class="i" style="left:1776.5px;top:913.5px;color:#a9afbc;" width="20" height="20" viewBox="0 0 256 256"><rect x="36" y="84" width="136" height="136" rx="10" fill="currentColor"/><path d="M88,52V44a8,8 0 0 1 8-8H212a8,8 0 0 1 8,8V160a8,8 0 0 1-8,8h-8" fill="none" stroke="currentColor" stroke-width="22" stroke-linecap="round" stroke-linejoin="round"/></svg><svg class="i" style="left:1833.5px;top:913.5px;color:#b87a7a;" width="20" height="20" viewBox="0 0 256 256"><path d="M100,24H156 M40,60H216 M200,60V208a8,8 0 0 1-8,8H64a8,8 0 0 1-8-8V60" fill="none" stroke="currentColor" stroke-width="24" stroke-linecap="round" stroke-linejoin="round"/></svg>
<div class="b" style="left:1534.0px;top:955.5px;width:333.0px;height:1.0px;background:#434956;"></div>
<div class="b" style="left:1534.0px;top:1047.0px;width:333.0px;height:41.0px;background:#434956;border-radius:5px;"></div>
<svg class="i" style="left:1548.5px;top:976.5px;color:#a9afbc;" width="20" height="20" viewBox="0 0 256 256"><rect x="32" y="48" width="192" height="160" rx="8" fill="none" stroke="currentColor" stroke-width="24" stroke-linejoin="round"/><path d="M160,84h32v32 M96,172H64V140" fill="none" stroke="currentColor" stroke-width="24" stroke-linecap="round" stroke-linejoin="round"/></svg>
<div class="t" style="top:966.5px;height:40px;line-height:40px;color:#e3e5e9;left:1587.0px;"><span style="font-size:18.81px;letter-spacing:0.271px">Transform</span></div>
<svg class="i" style="left:1548.5px;top:1016.5px;color:#a9afbc;" width="20" height="20" viewBox="0 0 256 256"><rect x="32" y="32" width="48" height="48" rx="8" fill="none" stroke="currentColor" stroke-width="24" stroke-linejoin="round"/><rect x="176" y="32" width="48" height="48" rx="8" fill="none" stroke="currentColor" stroke-width="24" stroke-linejoin="round"/><rect x="32" y="176" width="48" height="48" rx="8" fill="none" stroke="currentColor" stroke-width="24" stroke-linejoin="round"/><rect x="176" y="176" width="48" height="48" rx="8" fill="none" stroke="currentColor" stroke-width="24" stroke-linejoin="round"/><path d="M80,56H176 M80,200H176 M56,80V176 M200,80V176" fill="none" stroke="currentColor" stroke-width="24" stroke-linecap="round" stroke-linejoin="round"/></svg>
<div class="t" style="top:1006.5px;height:40px;line-height:40px;color:#e3e5e9;left:1587.0px;"><span style="font-size:18.81px;letter-spacing:0.064px">Fit to Bbox</span></div>
<svg class="i" style="left:1548.5px;top:1057.5px;color:#a9afbc;" width="20" height="20" viewBox="0 0 256 256"><path d="M160.9,8.3 L188.6,55.7 L243.5,58.0 L207.0,99.0 L221.8,151.9 L171.5,129.8 L125.8,160.3 L131.2,105.6 L88.1,71.6 L141.8,59.8Z" fill="currentColor"/><path d="M66,124 19,176 M98,176 35,239 M176,176 113,239" fill="none" stroke="currentColor" stroke-width="16" stroke-linecap="round"/></svg>
<div class="t" style="top:1047.5px;height:40px;line-height:40px;color:#e3e5e9;left:1587.0px;"><span style="font-size:18.81px;letter-spacing:0.141px">Filter</span></div>
<svg class="i" style="left:1548.5px;top:1097.5px;color:#a9afbc;" width="20" height="20" viewBox="0 0 256 256"><path d="M59,52 114,194H4Z" fill="currentColor"/><circle cx="158" cy="78" r="52" fill="currentColor"/><rect x="128" y="146" width="110" height="72" rx="8" fill="currentColor"/></svg>
<div class="t" style="top:1087.5px;height:40px;line-height:40px;color:#e3e5e9;left:1587.0px;"><span style="font-size:18.81px;letter-spacing:0.167px">Select Object</span></div>
<svg class="i" style="left:1548.5px;top:1138.5px;color:#a9afbc;" width="20" height="20" viewBox="0 0 256 256"><path d="M208,144a80,80 0 0 1-160,0C48,72 128,16 128,16s80,56 80,128Z M128,224V24 M128,128h76 M128,88h64 M128,168h72" fill="none" stroke="currentColor" stroke-width="20" stroke-linecap="round" stroke-linejoin="round"/></svg>
<div class="t" style="top:1128.5px;height:40px;line-height:40px;color:#e3e5e9;left:1587.0px;"><span class="cj" style="font-size:18.00px">禁用透明效果</span></div>
<div class="b" style="left:1534.0px;top:1178.0px;width:333.0px;height:1.0px;background:#434956;"></div>
<svg class="i" style="left:1548.5px;top:1197.0px;color:#5a6272;" width="20" height="20" viewBox="0 0 256 256"><path d="M16,104 128,168 240,104 128,40Z M16,152 128,216 240,152" fill="none" stroke="currentColor" stroke-width="22" stroke-linecap="round" stroke-linejoin="round"/></svg>
<div class="t" style="top:1188.0px;height:40px;line-height:40px;color:#707a8f;left:1587.0px;"><span class="cj" style="font-size:18.00px">向下合并</span></div>
<svg class="i" style="left:1548.5px;top:1238.5px;color:#a9afbc;" width="20" height="20" viewBox="0 0 256 256"><rect x="40" y="88" width="128" height="128" rx="6" fill="none" stroke="currentColor" stroke-width="24" stroke-linejoin="round"/><path d="M88,88V40H216V168H168" fill="none" stroke="currentColor" stroke-width="24" stroke-linecap="round" stroke-linejoin="round"/></svg>
<div class="t" style="top:1228.5px;height:40px;line-height:40px;color:#e3e5e9;left:1587.0px;"><span class="cj" style="font-size:18.00px">复制</span><span style="font-size:18.81px;letter-spacing:-0.156px"> </span><span class="cj" style="font-size:18.00px">控制层</span><span style="font-size:18.81px;letter-spacing:-0.156px"> </span><span class="cj" style="font-size:18.00px">到</span></div>
<svg class="i" style="left:1835.5px;top:1240.0px;color:#a9afbc;" width="17" height="17" viewBox="0 0 256 256"><path d="M96,48 176,128 96,208" fill="none" stroke="currentColor" stroke-width="24" stroke-linecap="round" stroke-linejoin="round"/></svg><svg class="i" style="left:1548.5px;top:1278.5px;color:#a9afbc;" width="20" height="20" viewBox="0 0 256 256"><path d="M40,128V64a8,8 0 0 1 8-8H208a8,8 0 0 1 8,8v40 M216,152v40a8,8 0 0 1-8,8H48a8,8 0 0 1-8-8V168 M88,104H184 M156,76 184,104 156,132 M168,152H72 M100,124 72,152 100,180" fill="none" stroke="currentColor" stroke-width="22" stroke-linecap="round" stroke-linejoin="round"/></svg>
<div class="t" style="top:1268.5px;height:40px;line-height:40px;color:#e3e5e9;left:1587.0px;"><span class="cj" style="font-size:18.00px">将</span><span style="font-size:18.81px;letter-spacing:-0.156px"> </span><span class="cj" style="font-size:18.00px">控制层</span><span style="font-size:18.81px;letter-spacing:-0.156px"> </span><span class="cj" style="font-size:18.00px">转换为</span></div>
<svg class="i" style="left:1835.5px;top:1280.0px;color:#a9afbc;" width="17" height="17" viewBox="0 0 256 256"><path d="M96,48 176,128 96,208" fill="none" stroke="currentColor" stroke-width="24" stroke-linecap="round" stroke-linejoin="round"/></svg><svg class="i" style="left:1548.5px;top:1319.5px;color:#a9afbc;" width="20" height="20" viewBox="0 0 256 256"><path d="M64,24V192H232 M24,64H192V232" fill="none" stroke="currentColor" stroke-width="24" stroke-linecap="round" stroke-linejoin="round"/></svg>
<div class="t" style="top:1309.5px;height:40px;line-height:40px;color:#e3e5e9;left:1587.0px;"><span class="cj" style="font-size:18.00px">将图层裁剪到边界框</span></div>
<svg class="i" style="left:1548.5px;top:1359.5px;color:#a9afbc;" width="20" height="20" viewBox="0 0 256 256"><path d="M216,91.3V208a8,8 0 0 1-8,8H48a8,8 0 0 1-8-8V48a8,8 0 0 1 8-8H164.7a8,8 0 0 1 5.6,2.3l43.4,43.4A8,8 0 0 1 216,91.3Z M80,216V152a8,8 0 0 1 8-8h80a8,8 0 0 1 8,8v64 M152,72H96" fill="none" stroke="currentColor" stroke-width="24" stroke-linecap="round" stroke-linejoin="round"/></svg>
<div class="t" style="top:1349.5px;height:40px;line-height:40px;color:#e3e5e9;left:1587.0px;"><span class="cj" style="font-size:18.00px">将图层保存到资产</span></div>
</body></html>
